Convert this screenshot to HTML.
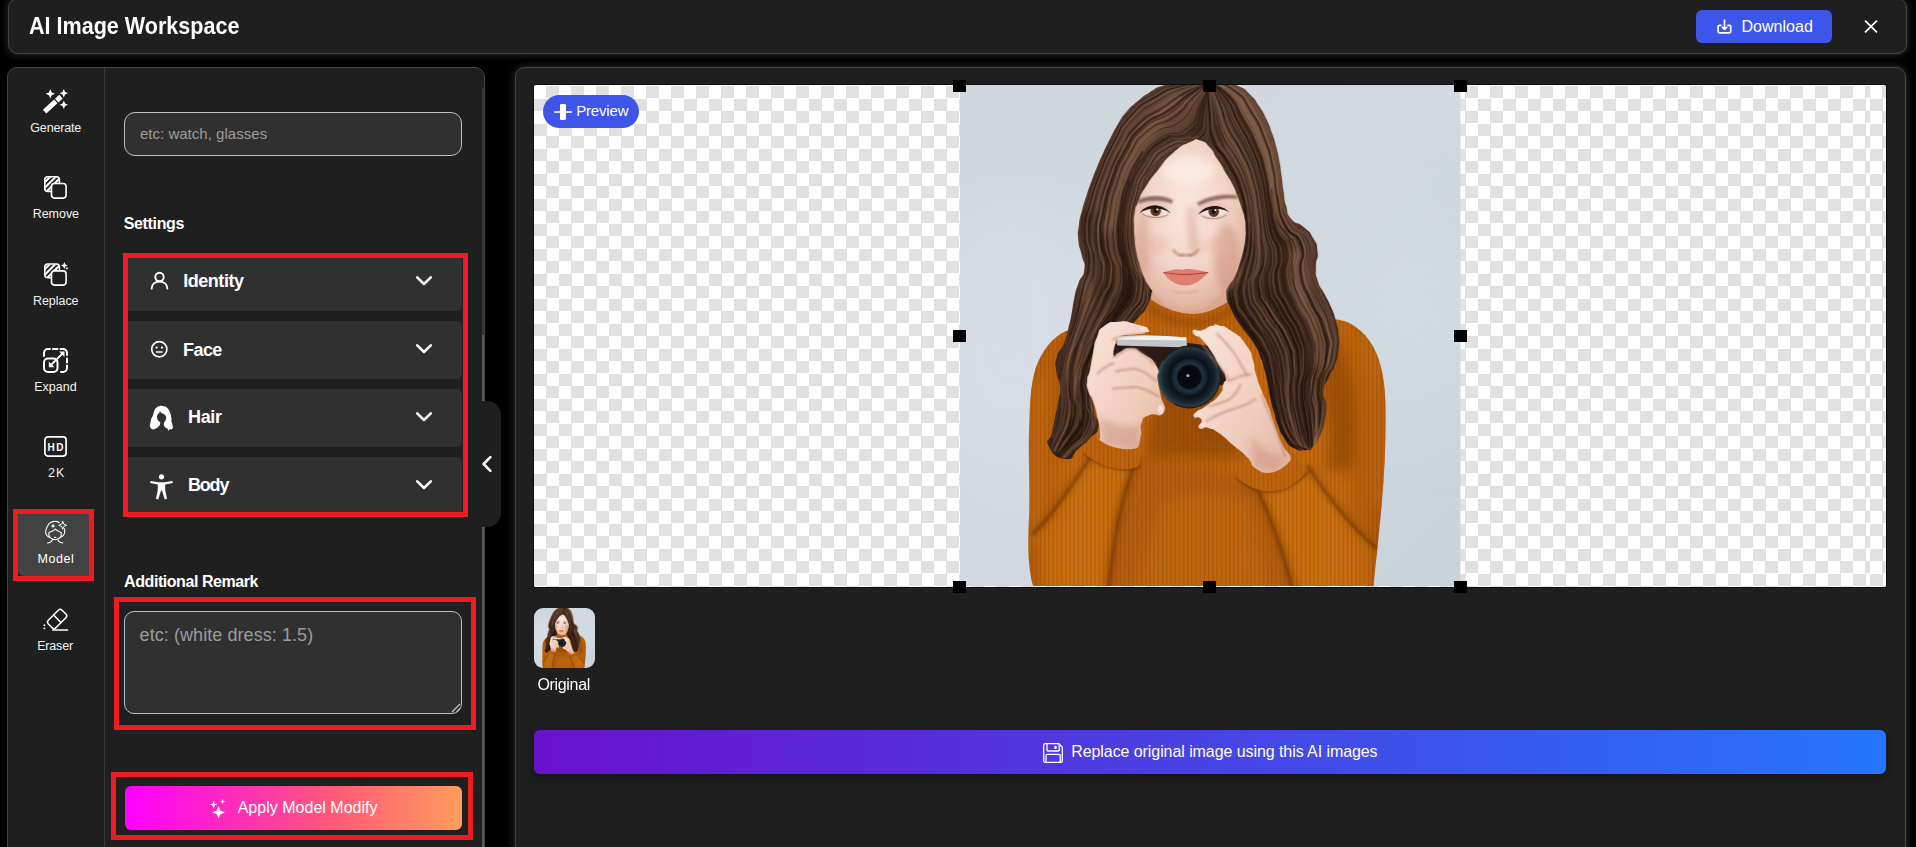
<!DOCTYPE html>
<html lang="en">
<head>
<meta charset="utf-8">
<title>AI Image Workspace</title>
<style>
*{box-sizing:border-box;margin:0;padding:0}
html,body{width:1916px;height:847px;overflow:hidden;background:#000}
body{font-family:"Liberation Sans",sans-serif;color:#fff;position:relative}
#app{position:absolute;left:0;top:0;width:1916px;height:847px;overflow:hidden;background:#000}
.abs{position:absolute}
.t{position:absolute;white-space:nowrap;line-height:1;color:#fff}
.b{font-weight:700}
.panel{position:absolute;background:#1f1f1f;border:1px solid #4b4343;border-radius:10px}
.glow{box-shadow:0 0 7px 1px rgba(255,255,255,.16)}
.red{position:absolute;border:5px solid #ed1c24;z-index:5}
.acc{position:absolute;left:124px;width:338px;height:58px;background:#303030;border-radius:6px}
.lbl{font-size:12.5px;color:#f2f2f2}
.ph{color:#9b9b9b}
svg{position:absolute;overflow:visible}
.ck{top:1px;height:520px;background-image:conic-gradient(#e1e1e1 25%,#fff 0 50%,#e1e1e1 0 75%,#fff 0);background-size:25px 25px}
.hd{width:13px;height:12px;background:#000;z-index:4}
</style>
</head>
<body>
<div id="app">

<!-- ===== HEADER ===== -->
<div class="panel glow" id="header" style="left:8px;top:-2px;width:1899px;height:56px"></div>
<div class="t b" id="t-title" style="left:29.2px;top:14.0px;transform:scaleX(0.8981);transform-origin:0 0;font-size:24px">AI Image Workspace</div>
<div class="abs" id="dl" style="left:1696px;top:10px;width:136px;height:33px;background:#3d55e9;border-radius:6px"></div>
<div class="t" id="t-dl" style="left:1741.5px;top:19.0px;letter-spacing:0.023px;font-size:16px">Download</div>
<svg style="left:1717px;top:19px" width="15" height="15" viewBox="0 0 15 15" fill="none" stroke="#fff" stroke-width="1.7" stroke-linejoin="round">
  <path d="M4.6 6.3 H2.2 a1.1 1.1 0 0 0 -1.1 1.1 V12.6 a1.3 1.3 0 0 0 1.3 1.3 H12.4 a1.3 1.3 0 0 0 1.3 -1.3 V7.4 a1.1 1.1 0 0 0 -1.1 -1.1 H10.4"/>
  <path d="M7.5 0.6 V10.2 M4.9 7.8 L7.5 10.4 L10.1 7.8"/>
</svg>
<svg style="left:1864px;top:19.5px" width="14" height="13" viewBox="0 0 14 13" stroke="#fff" stroke-width="1.7" stroke-linecap="butt"><line x1="1" y1="0.6" x2="13" y2="12.4"/><line x1="13" y1="0.6" x2="1" y2="12.4"/></svg>


<!-- ===== LEFT PANEL ===== -->
<div class="panel" id="left" style="left:7px;top:67px;width:478px;height:800px"></div>
<div class="abs" style="left:104px;top:68px;width:1px;height:780px;background:#3a3636"></div>
<!-- ===== SIDEBAR ITEMS ===== -->
<div class="abs" id="sel" style="left:18px;top:510px;width:76px;height:66px;background:#424242;border-radius:6px"></div>
<div class="red" style="left:13px;top:509px;width:81px;height:72px"></div>

<!-- Generate -->
<svg style="left:43px;top:89px" width="25" height="25" viewBox="0 0 25 25">
  <polygon fill="#fff" points="7.3,0.1 8.7,3.4 12,4.8 8.7,6.2 7.3,9.5 5.9,6.2 2.6,4.8 5.9,3.4"/>
  <polygon fill="#fff" points="20.8,0 22.1,2.9 25,4.2 22.1,5.5 20.8,8.4 19.5,5.5 16.6,4.2 19.5,2.9"/>
  <polygon fill="#fff" points="20.8,11.6 22.1,14.5 25,15.8 22.1,17.1 20.8,20 19.5,17.1 16.6,15.8 19.5,14.5"/>
  <line x1="1.6" y1="22.6" x2="18.6" y2="7.2" stroke="#1f1f1f" stroke-width="7.4"/>
  <line x1="1.6" y1="22.6" x2="18" y2="7.7" stroke="#fff" stroke-width="5"/>
  <line x1="10.9" y1="9.4" x2="15.6" y2="14.6" stroke="#1f1f1f" stroke-width="1.3"/>
</svg>
<div class="t lbl" id="t-gen" style="left:30.3px;top:122.0px;letter-spacing:-0.160px;">Generate</div>

<!-- Remove -->
<svg style="left:44px;top:176px" width="23" height="23" viewBox="0 0 23 23">
  <defs><clipPath id="cp1"><rect x="1.2" y="1.2" width="13.8" height="13.8" rx="2.2"/></clipPath></defs>
  <g clip-path="url(#cp1)" stroke="#fff" stroke-width="2.1">
    <line x1="-2" y1="9" x2="9" y2="-2"/><line x1="-2" y1="14.5" x2="14.5" y2="-2"/><line x1="-2" y1="20" x2="20" y2="-2"/>
  </g>
  <rect x="0.8" y="0.8" width="14.6" height="14.6" rx="3" fill="none" stroke="#fff" stroke-width="1.6"/>
  <rect x="7.5" y="7.5" width="14.6" height="14.6" rx="3" fill="#1f1f1f" stroke="#fff" stroke-width="1.6"/>
</svg>
<div class="t lbl" id="t-rem" style="left:32.7px;top:208.0px;letter-spacing:-0.032px;">Remove</div>

<!-- Replace -->
<svg style="left:44px;top:262px" width="24" height="24" viewBox="0 0 24 24">
  <defs><clipPath id="cp2"><rect x="1.2" y="2.4" width="13.8" height="13" rx="2.2"/></clipPath></defs>
  <g clip-path="url(#cp2)" stroke="#fff" stroke-width="2.1">
    <line x1="-2" y1="10" x2="10" y2="-2"/><line x1="-2" y1="15.5" x2="15.5" y2="-2"/><line x1="-2" y1="21" x2="21" y2="-2"/>
  </g>
  <rect x="0.8" y="2" width="14.6" height="13.8" rx="3" fill="none" stroke="#fff" stroke-width="1.6"/>
  <rect x="7.5" y="8.9" width="14.6" height="14.2" rx="3" fill="#1f1f1f" stroke="#fff" stroke-width="1.6"/>
  <polygon fill="#fff" points="20.3,0 21.3,2.5 23.8,3.5 21.3,4.5 20.3,7 19.3,4.5 16.8,3.5 19.3,2.5"/>
  <polygon fill="#fff" points="22.9,4.6 23.4,5.8 24.6,6.3 23.4,6.8 22.9,8 22.4,6.8 21.2,6.3 22.4,5.8"/>
</svg>
<div class="t lbl" id="t-rep" style="left:32.9px;top:295.0px;letter-spacing:-0.030px;">Replace</div>

<!-- Expand -->
<svg style="left:43px;top:348px" width="25" height="25" viewBox="0 0 25 25">
  <path d="M1 8 V5 a4 4 0 0 1 4 -4 H7 M10 1 H14.5 M17.5 1 H20 a4 4 0 0 1 4 4 V7 M24 10.5 V14.5 M24 17.5 V20 a4 4 0 0 1 -4 4 H18" fill="none" stroke="#fff" stroke-width="2" stroke-linecap="round"/>
  <rect x="1" y="10.5" width="13.5" height="13.5" rx="4" fill="none" stroke="#fff" stroke-width="2"/>
  <line x1="7.5" y1="17.5" x2="20" y2="5" stroke="#fff" stroke-width="1.8"/>
  <polygon fill="#fff" points="21.5,3.5 21.5,9 16,3.5"/>
  <polygon fill="#fff" points="5.8,19.2 5.8,13.5 11.5,19.2"/>
</svg>
<div class="t lbl" id="t-exp" style="left:34.3px;top:381.0px;letter-spacing:-0.019px;">Expand</div>

<!-- 2K / HD -->
<svg style="left:44px;top:436px" width="23" height="21" viewBox="0 0 23 21">
  <rect x="0.9" y="0.9" width="21.2" height="19.2" rx="3" fill="none" stroke="#fff" stroke-width="1.7"/>
  <text id="t-hd" x="12.3" y="14.7" text-anchor="middle" font-family="Liberation Sans, sans-serif" font-weight="700" font-size="10" letter-spacing="1.7" fill="#fff">HD</text>
</svg>
<div class="t lbl" id="t-2k" style="left:48.0px;top:467.0px;letter-spacing:1.084px;">2K</div>

<!-- Model -->
<svg style="left:45px;top:521px" width="22" height="24" viewBox="0 0 22 24" fill="none" stroke="#fff" stroke-width="1.1" stroke-linecap="round" stroke-linejoin="round">
  <path d="M14.3 1.7 C13 0.8 11.6 0.4 10.1 0.4 C8.6 0.4 7.2 0.7 6 1.3 C4.4 2.1 3.3 3.4 2.6 4.9 C1.5 7.1 0.7 8.6 0.7 10.2 C0.7 11.8 0.9 13 1.5 14 C2.2 15 3.2 15.8 4.3 16.2"/>
  <path d="M19.2 7.6 C19.6 8.6 19.8 9.8 19.7 11 C19.6 12.2 19.3 13.2 18.7 14 C18.1 14.9 17.2 15.6 16.1 16"/>
  <path d="M10.1 8 C9.3 9 8.5 9.7 7.5 10.1 C6.5 10.6 5.3 11 4.1 11.2 C3.8 12.2 3.8 13 3.9 13.9 C4 14.6 4.2 15.2 4.5 15.7 C5.3 16.8 6.4 17.6 7.5 18.1 C8.3 18.5 9.2 18.8 10.1 18.8 C11 18.8 11.9 18.5 12.7 18.1 C13.9 17.5 15 16.7 15.8 15.6 C16.2 14.6 16.4 13.2 16.2 11.6 C15 11.2 14 10.6 13.1 9.9 C12 9.4 11 8.8 10.1 8 Z"/>
  <path d="M7.6 18.3 C7.2 19.6 6.4 20.6 5.2 21.2 C4.4 21.6 3.4 21.9 2.4 22"/>
  <path d="M12.7 18.3 C13.1 19.6 13.9 20.6 15.1 21.2 C15.9 21.6 16.8 21.9 17.8 22"/>
  <path d="M9.5 16.3 h1.3" stroke-width="1.2"/>
  <path d="M17.7 0.3 L18.8 3.2 L21.7 4.3 L18.8 5.4 L17.7 8.3 L16.6 5.4 L13.7 4.3 L16.6 3.2 Z" stroke-width="0.95"/>
  <polygon fill="#fff" stroke="none" points="8,2.6 8.7,4.3 10.4,5 8.7,5.7 8,7.4 7.3,5.7 5.6,5 7.3,4.3"/>
</svg>
<div class="t lbl" id="t-mod" style="left:37.6px;top:553.0px;letter-spacing:0.565px;color:#fff">Model</div>

<!-- Eraser -->
<svg style="left:43px;top:608px" width="25" height="23" viewBox="0 0 25 23" fill="none" stroke="#fff" stroke-width="1.5" stroke-linecap="round">
  <rect x="-9.7" y="-5.35" width="19.4" height="10.7" rx="2.6" transform="translate(14.1,11) rotate(-45)"/>
  <line x1="10.6" y1="6.9" x2="17.9" y2="14.5"/>
  <line x1="9.6" y1="21.9" x2="24.6" y2="21.9"/>
  <rect x="0.6" y="16.4" width="1.6" height="1.6" fill="#fff" stroke="none"/>
  <rect x="0.6" y="19.6" width="1.6" height="1.6" fill="#fff" stroke="none"/>
</svg>
<div class="t lbl" id="t-era" style="left:37.2px;top:640.0px;letter-spacing:-0.188px;">Eraser</div>


<!-- ===== SETTINGS COLUMN ===== -->
<div class="abs" id="inp1" style="left:124px;top:112px;width:338px;height:44px;background:#303030;border:1px solid #b9c0c8;border-radius:11px"></div>
<div class="t ph" id="t-ph1" style="left:139.9px;top:126.3px;letter-spacing:0.029px;font-size:15px">etc: watch, glasses</div>

<div class="t b" id="t-set" style="left:123.7px;top:216.3px;letter-spacing:-0.341px;font-size:16px">Settings</div>

<div class="acc" style="top:253px"></div>
<div class="acc" style="top:321px"></div>
<div class="acc" style="top:389px"></div>
<div class="acc" style="top:457px"></div>
<div class="red" style="left:123px;top:253px;width:345px;height:264px"></div>

<!-- identity icon -->
<svg style="left:150px;top:271px" width="19" height="19" viewBox="0 0 19 19" fill="none" stroke="#fff" stroke-width="1.9">
  <circle cx="9.5" cy="6" r="4.2"/>
  <path d="M1.6 17.6 C1.8 13.4 5 10.6 9.5 10.6 C14 10.6 17.2 13.4 17.4 17.6" stroke-linecap="round"/>
</svg>
<div class="t b" id="t-id" style="left:183.2px;top:272.0px;letter-spacing:-0.458px;font-size:18px">Identity</div>

<!-- face icon -->
<svg style="left:150px;top:340px" width="19" height="19" viewBox="0 0 19 19" fill="none" stroke="#fff">
  <circle cx="9.3" cy="9.3" r="7.6" stroke-width="1.7"/>
  <circle cx="6.6" cy="7.6" r="1.15" fill="#fff" stroke="none"/>
  <circle cx="12" cy="7.6" r="1.15" fill="#fff" stroke="none"/>
  <line x1="6" y1="12" x2="12.6" y2="12" stroke-width="1.5"/>
</svg>
<div class="t b" id="t-face" style="left:183.0px;top:341.1px;letter-spacing:-0.552px;font-size:18px">Face</div>

<!-- hair icon -->
<svg style="left:149px;top:405px" width="25" height="26" viewBox="0 0 25 26">
  <path fill="#fff" d="M13.3 0.9 C11.3 0.8 12.1 0.8 10.2 1.3 C8.3 1.8 9.1 1.4 7.7 2.4 C6.3 3.4 6.8 3.0 5.9 4.4 C5.0 5.8 5.5 5.1 5.0 6.6 C4.5 8.1 4.9 7.4 4.4 9.0 C3.9 10.6 4.2 9.8 3.5 11.3 C2.8 12.8 3.0 12.0 2.4 13.6 C1.8 15.2 2.1 14.5 1.7 16.2 C1.3 17.9 1.6 17.0 1.3 18.6 C1.1 20.2 0.8 19.4 0.9 20.9 C1.1 22.4 1.1 21.9 1.8 23.0 C2.5 24.1 1.8 24.0 3.1 24.3 C4.4 24.6 4.1 24.3 5.6 23.9 C7.1 23.5 6.4 23.8 7.7 23.0 C9.0 22.2 8.6 22.6 9.6 21.6 C10.6 20.6 10.2 21.0 10.7 20.0 C11.2 19.0 11.1 19.5 11.2 18.6 C11.3 17.7 11.6 18.2 11.1 17.3 C10.6 16.4 10.4 16.9 9.6 16.0 C8.8 15.1 9.1 15.6 8.6 14.5 C8.1 13.4 8.2 13.9 8.1 12.8 C8.0 11.7 8.0 12.2 8.2 11.1 C8.4 10.0 8.2 10.5 8.6 9.5 C9.0 8.5 8.9 8.5 9.4 8.2 C9.9 7.9 9.9 8.9 10.2 8.6 C10.5 8.3 10.1 8.0 10.4 7.2 C10.7 6.4 10.6 6.2 11.1 6.3 C11.6 6.4 11.3 6.8 11.9 7.4 C12.5 8.0 12.0 7.8 12.8 8.2 C13.6 8.6 13.3 8.3 14.2 8.7 C15.1 9.1 14.6 8.8 15.4 9.4 C16.2 10.0 15.9 9.6 16.5 10.5 C17.1 11.4 16.9 11.0 17.1 12.0 C17.3 13.0 17.2 12.6 17.1 13.6 C17.0 14.6 17.1 14.0 16.7 15.0 C16.3 16.0 16.4 15.6 15.8 16.6 C15.2 17.6 15.3 17.0 15.0 17.9 C14.7 18.8 14.8 18.4 14.8 19.3 C14.8 20.2 14.6 19.6 15.0 20.5 C15.4 21.4 15.2 21.1 15.9 21.9 C16.6 22.7 16.2 22.3 17.1 23.0 C18.0 23.7 17.8 23.0 18.6 23.9 C19.4 24.8 18.9 25.4 19.6 25.6 C20.3 25.8 19.6 24.8 20.6 24.4 C21.6 24.0 21.6 24.7 22.6 24.3 C23.6 23.9 23.1 24.0 23.5 23.2 C23.9 22.4 24.0 23.1 23.9 21.8 C23.8 20.5 23.7 21.0 23.3 19.4 C22.9 17.8 22.9 18.7 22.6 17.1 C22.3 15.5 22.6 16.2 22.5 14.5 C22.4 12.8 22.5 13.6 22.2 12.0 C21.9 10.4 22.1 11.2 21.7 9.6 C21.3 8.0 21.5 8.7 20.9 7.3 C20.3 5.9 20.7 6.6 20.0 5.3 C19.3 4.0 19.6 4.5 18.8 3.5 C18.0 2.5 18.5 3.0 17.6 2.4 C16.7 1.8 17.6 2.1 16.2 1.6 C14.8 1.1 15.3 1.1 13.3 0.9 Z"/>
</svg>
<div class="t b" id="t-hair" style="left:188.1px;top:408.0px;letter-spacing:-0.365px;font-size:18px">Hair</div>

<!-- body icon -->
<svg style="left:150px;top:474px" width="23" height="26" viewBox="0 0 23 26">
  <circle cx="11.5" cy="2.8" r="2.6" fill="#fff"/>
  <path fill="#fff" d="M0.6 7 L8.6 8.2 L14.4 8.2 L22.4 7 L22.8 9 L15.2 10.6 L15.2 16 L17 24.8 L14.8 25.4 L11.9 16.6 L11.1 16.6 L8.2 25.4 L6 24.8 L7.8 16 L7.8 10.6 L0.2 9 Z"/>
</svg>
<div class="t b" id="t-body" style="left:188.1px;top:475.8px;letter-spacing:-1.235px;font-size:18px">Body</div>

<!-- chevrons -->
<svg style="left:415px;top:275px" width="18" height="12" viewBox="0 0 18 12" fill="none" stroke="#fff" stroke-width="2.6" stroke-linecap="round" stroke-linejoin="round"><path d="M2.2 2.4 L9 9 L15.8 2.4"/></svg>
<svg style="left:415px;top:343px" width="18" height="12" viewBox="0 0 18 12" fill="none" stroke="#fff" stroke-width="2.6" stroke-linecap="round" stroke-linejoin="round"><path d="M2.2 2.4 L9 9 L15.8 2.4"/></svg>
<svg style="left:415px;top:411px" width="18" height="12" viewBox="0 0 18 12" fill="none" stroke="#fff" stroke-width="2.6" stroke-linecap="round" stroke-linejoin="round"><path d="M2.2 2.4 L9 9 L15.8 2.4"/></svg>
<svg style="left:415px;top:479px" width="18" height="12" viewBox="0 0 18 12" fill="none" stroke="#fff" stroke-width="2.6" stroke-linecap="round" stroke-linejoin="round"><path d="M2.2 2.4 L9 9 L15.8 2.4"/></svg>

<div class="t b" id="t-add" style="left:124.1px;top:574.1px;letter-spacing:-0.440px;font-size:16px">Additional Remark</div>
<div class="abs" id="ta" style="left:124px;top:611px;width:338px;height:103px;background:#303030;border:1px solid #b9c0c8;border-radius:10px"></div>
<div class="t ph" id="t-ph2" style="left:139.6px;top:625.7px;letter-spacing:0.070px;font-size:18px">etc: (white dress: 1.5)</div>
<svg style="left:451px;top:703px" width="10" height="10" viewBox="0 0 10 10" stroke="#c8c8c8" stroke-width="1.1"><line x1="1" y1="9" x2="9" y2="1"/><line x1="5.5" y1="9" x2="9" y2="5.5"/></svg>
<div class="red" style="left:114px;top:597px;width:362px;height:133px"></div>

<div class="abs" id="apply" style="left:125px;top:786px;width:337px;height:44px;border-radius:6px;background:linear-gradient(90deg,#ff00ff 0%,#ff2fb4 35%,#ff5a78 62%,#ff9d5c 100%)"></div>
<svg style="left:210px;top:799px" width="16" height="20" viewBox="0 0 16 20">
  <polygon fill="#fff" points="8.6,7 10.4,11.6 15,13.4 10.4,15.2 8.6,19.8 6.8,15.2 2.2,13.4 6.8,11.6"/>
  <polygon fill="#fff" points="3.6,2 4.6,4.6 7.2,5.6 4.6,6.6 3.6,9.2 2.6,6.6 0,5.6 2.6,4.6"/>
  <polygon fill="#fff" points="12.6,0 13.3,1.9 15.2,2.6 13.3,3.3 12.6,5.2 11.9,3.3 10,2.6 11.9,1.9"/>
</svg>
<div class="t" id="t-apply" style="left:237.7px;top:799.8px;letter-spacing:0.012px;font-size:16px">Apply Model Modify</div>
<div class="red" style="left:111px;top:772px;width:362px;height:68px"></div>

<!-- scrollbar + collapse tab -->
<div class="abs" style="left:482px;top:88px;width:2px;height:760px;background:#343434"></div>
<div class="abs" style="left:482px;top:335px;width:2px;height:520px;background:#5a5a5a"></div>
<div class="abs" style="left:485px;top:62px;width:24px;height:800px;background:#000"></div>
<div class="abs" id="tab" style="left:472px;top:401px;width:29px;height:126px;background:#1f1f1f;border-radius:0 14px 14px 0"></div>
<svg style="left:481px;top:455px" width="12" height="18" viewBox="0 0 12 18" fill="none" stroke="#fff" stroke-width="2.6" stroke-linecap="round" stroke-linejoin="round"><path d="M9.4 2.2 L2.6 9 L9.4 15.8"/></svg>


<!-- ===== RIGHT PANEL ===== -->
<div class="panel glow" id="right" style="left:515px;top:67px;width:1391px;height:800px"></div>
<!-- ===== CANVAS ===== -->
<div class="abs" id="canvas" style="left:533.5px;top:85px;width:1352.5px;height:501.5px;border-radius:2px;box-shadow:0 0 0 1px rgba(0,0,0,.55);background:#fff;overflow:hidden">
<div class="abs ck" style="left:0;width:668.9px"></div>
<div class="abs ck" style="left:669.9px;width:666.2px"></div>
<div class="abs ck" style="left:1336.1px;width:20px"></div>
</div>
<!--PHOTO-START--><svg width="0" height="0" style="position:absolute">
<defs>
  <linearGradient id="gbg" x1="0" y1="0" x2="1" y2="1">
    <stop offset="0" stop-color="#cfd6de"/><stop offset=".5" stop-color="#d2d9e1"/><stop offset="1" stop-color="#c9d3dc"/>
  </linearGradient>
  <radialGradient id="gface" cx=".47" cy=".4" r=".66">
    <stop offset="0" stop-color="#fbe7de"/><stop offset=".55" stop-color="#f3d5c8"/><stop offset=".85" stop-color="#e4b7a3"/><stop offset="1" stop-color="#d09c86"/>
  </radialGradient>
  <linearGradient id="ghair" x1="0" y1="0" x2="0" y2="1">
    <stop offset="0" stop-color="#5b4132"/><stop offset=".35" stop-color="#4e3529"/><stop offset=".7" stop-color="#3f291f"/><stop offset="1" stop-color="#35211a"/>
  </linearGradient>
  <linearGradient id="gsw" x1="0" y1="0" x2="1" y2="0">
    <stop offset="0" stop-color="#b55c0b"/><stop offset=".15" stop-color="#c76b10"/><stop offset=".5" stop-color="#c1650d"/><stop offset=".85" stop-color="#c76b10"/><stop offset="1" stop-color="#ae570a"/>
  </linearGradient>
  <linearGradient id="gskin" x1="0" y1="0" x2="1" y2="1">
    <stop offset="0" stop-color="#fae4da"/><stop offset=".6" stop-color="#f0cdbd"/><stop offset="1" stop-color="#e2b39d"/>
  </linearGradient>
  <radialGradient id="glens" cx=".5" cy=".5" r=".5">
    <stop offset="0" stop-color="#04060a"/><stop offset=".36" stop-color="#070b10"/><stop offset=".42" stop-color="#223340"/><stop offset=".56" stop-color="#15222c"/><stop offset=".6" stop-color="#0b1218"/><stop offset=".8" stop-color="#18232b"/><stop offset=".93" stop-color="#2b3a44"/><stop offset="1" stop-color="#0d1216"/>
  </radialGradient>
  <filter id="b1" x="-10%" y="-10%" width="120%" height="120%"><feGaussianBlur stdDeviation="1"/></filter>
  <filter id="b05" x="-5%" y="-5%" width="110%" height="110%"><feGaussianBlur stdDeviation=".6"/></filter>
  <filter id="b3" x="-20%" y="-20%" width="140%" height="140%"><feGaussianBlur stdDeviation="3.5"/></filter>
  <filter id="b40" x="-100%" y="-100%" width="300%" height="300%"><feGaussianBlur stdDeviation="40"/></filter>
  <filter id="b6" x="-30%" y="-30%" width="160%" height="160%"><feGaussianBlur stdDeviation="7"/></filter>
  <pattern id="rib" width="4.2" height="8" patternUnits="userSpaceOnUse"><rect x="0" width="1.1" height="8" fill="#7a3c06" opacity=".36"/></pattern>
  <clipPath id="chL"><path d="M249.0 -2.0 C243.3 -7.2 243.9 -2.1 233.6 -2.0 C223.4 -1.9 228.5 -2.5 218.3 -1.7 C208.1 -0.8 212.8 -2.4 203.1 0.5 C193.5 3.5 198.0 1.9 189.4 7.3 C180.7 12.6 185.0 10.0 177.2 16.6 C169.4 23.2 172.6 19.4 166.0 27.1 C159.4 34.8 162.7 31.1 157.4 39.8 C152.1 48.5 154.8 44.2 150.1 53.3 C145.5 62.4 147.7 57.9 143.4 67.2 C139.1 76.4 141.2 71.8 137.2 81.2 C133.3 90.6 135.1 85.9 131.6 95.5 C128.0 105.1 129.7 100.3 126.5 110.0 C123.4 119.7 124.7 114.8 122.1 124.7 C119.6 134.6 120.2 129.6 118.9 139.7 C117.6 149.8 117.3 144.9 118.2 155.0 C119.1 165.1 119.5 160.2 121.6 170.0 C123.6 179.9 125.5 175.0 124.4 184.6 C123.3 194.1 121.7 189.0 118.2 198.7 C114.8 208.3 116.4 203.5 114.1 213.4 C111.9 223.4 113.5 218.5 111.6 228.6 C109.7 238.6 110.9 233.7 108.4 243.6 C105.9 253.5 108.0 248.9 104.1 258.3 C100.2 267.7 99.5 262.4 96.9 271.8 C94.2 281.3 95.2 276.8 96.3 286.8 C97.3 296.7 99.4 291.6 100.0 301.6 C100.6 311.7 99.7 306.7 98.1 316.8 C96.4 326.9 97.1 321.8 95.1 331.9 C93.2 341.9 94.2 336.9 92.1 347.0 C90.1 357.0 84.4 353.0 89.0 362.0 C93.6 371.0 96.4 373.3 106.0 374.0 C115.6 374.7 110.0 370.8 117.8 364.0 C125.6 357.2 122.5 361.2 129.4 353.7 C136.3 346.1 136.9 350.4 138.4 341.4 C140.0 332.4 135.8 336.8 134.1 326.7 C132.4 316.7 133.2 321.5 133.4 311.3 C133.6 301.0 132.7 305.9 134.7 295.8 C136.7 285.8 135.5 290.6 139.5 281.1 C143.5 271.7 141.3 276.2 146.8 267.5 C152.3 258.8 149.4 263.0 156.0 255.1 C162.6 247.1 159.3 251.0 166.5 243.7 C173.7 236.3 170.9 240.6 177.7 232.9 C184.5 225.3 183.0 229.8 187.0 220.7 C191.0 211.6 190.3 215.7 189.8 205.7 C189.3 195.8 188.6 200.7 185.6 190.8 C182.6 181.0 183.5 186.0 180.8 176.1 C178.2 166.1 178.8 171.2 177.5 161.0 C176.2 150.8 176.8 155.8 176.9 145.5 C177.0 135.2 176.4 140.3 177.7 130.0 C179.1 119.8 178.2 124.8 180.9 114.9 C183.6 105.0 181.8 109.7 185.8 100.2 C189.9 90.8 187.3 95.1 193.0 86.5 C198.7 78.0 195.4 81.6 202.8 74.6 C210.2 67.5 206.1 69.5 215.2 65.4 C224.4 61.4 220.4 64.7 230.4 62.5 C240.3 60.2 238.7 64.6 245.2 58.6 C251.7 52.6 248.3 54.3 249.9 44.5 C251.6 34.6 249.8 39.3 250.1 29.0 C250.3 18.6 251.1 23.8 250.7 13.5 C250.4 3.2 254.7 3.2 249.0 -2.0 Z"/></clipPath>
  <clipPath id="chR"><path d="M249.0 -2.0 C254.5 -6.5 254.0 -2.6 263.7 -1.5 C273.5 -0.4 269.4 -2.6 278.2 1.2 C286.9 5.0 283.1 3.1 290.0 9.9 C296.9 16.7 293.6 13.4 298.9 21.6 C304.3 29.8 301.9 25.6 306.1 34.5 C310.3 43.3 308.3 38.9 311.6 48.2 C314.8 57.4 313.4 52.8 315.9 62.3 C318.3 71.8 317.3 67.0 319.0 76.7 C320.7 86.4 319.7 81.6 321.1 91.3 C322.4 101.0 321.5 96.2 323.0 105.9 C324.5 115.6 322.9 111.1 325.5 120.5 C328.1 129.8 325.0 126.8 330.8 134.0 C336.7 141.2 335.9 135.7 343.1 142.0 C350.4 148.4 348.0 144.7 352.6 153.1 C357.3 161.4 356.2 157.5 357.1 167.0 C358.0 176.5 355.3 172.0 355.3 181.6 C355.4 191.3 354.3 186.8 357.2 196.0 C360.1 205.1 359.5 200.3 364.0 209.1 C368.4 217.8 366.7 213.2 370.6 222.3 C374.4 231.3 372.9 226.7 375.5 236.2 C378.0 245.6 377.4 240.9 378.2 250.7 C379.0 260.4 379.1 255.7 377.8 265.4 C376.6 275.0 377.8 270.6 374.4 279.7 C371.1 288.8 371.7 283.9 367.8 292.8 C363.9 301.6 363.7 296.9 362.8 306.2 C362.0 315.6 365.0 311.0 365.4 320.8 C365.7 330.5 365.8 325.8 363.9 335.4 C362.1 345.0 363.8 340.7 359.8 349.5 C355.8 358.4 356.6 356.8 352.0 362.0 C347.4 367.2 352.4 364.7 346.0 365.0 C339.6 365.3 340.4 367.0 332.9 362.8 C325.4 358.6 328.7 360.1 323.6 352.4 C318.5 344.7 320.9 348.4 317.6 339.7 C314.2 331.0 316.1 335.3 313.5 326.3 C310.9 317.2 312.0 321.8 309.9 312.7 C307.9 303.5 309.2 308.0 307.3 298.9 C305.4 289.7 306.7 294.2 304.2 285.2 C301.8 276.1 303.4 280.5 299.9 271.8 C296.5 263.1 298.7 267.1 293.9 259.1 C289.1 251.1 291.2 255.3 285.6 247.8 C280.1 240.2 282.3 244.4 277.3 236.5 C272.3 228.6 274.5 232.6 270.7 224.0 C267.0 215.5 266.6 219.7 266.1 210.8 C265.7 202.0 266.4 206.2 269.4 197.5 C272.5 188.8 271.5 193.3 275.2 184.7 C278.9 176.1 277.9 180.6 280.5 171.7 C283.2 162.8 282.0 167.2 283.1 157.9 C284.3 148.6 284.0 153.2 284.0 143.9 C284.0 134.5 284.3 139.1 283.3 129.8 C282.3 120.5 283.1 125.1 281.0 116.0 C278.9 106.9 280.1 111.3 276.9 102.5 C273.8 93.7 275.7 97.9 271.4 89.6 C267.2 81.3 269.7 85.1 264.2 77.6 C258.6 70.2 259.5 75.0 254.8 67.2 C250.1 59.3 252.0 63.1 250.0 54.1 C247.9 45.1 249.4 49.5 248.6 40.1 C247.9 30.8 248.2 35.5 247.7 26.1 C247.3 16.7 246.8 21.4 247.3 12.1 C247.7 2.7 243.5 2.5 249.0 -2.0 Z"/></clipPath>
  <clipPath id="csw"><path d="M73 501 C67 480 68 455 69 430 C70 400 68 370 69 345 C70 320 70 300 76 282 C82 266 92 252 106 246 C130 236 160 232 186 222 L190 214 C205 224 220 228 232 228 C246 228 262 222 276 211 L280 222 C310 228 350 228 384 236 C400 242 412 256 418 274 C424 292 425 310 425 330 C425 360 424 390 421 420 C419 445 416 470 413 501 Z"/></clipPath>

  <symbol id="photo" viewBox="0 0 500 501" preserveAspectRatio="none">
    <rect width="500" height="501" fill="url(#gbg)"/>
    <ellipse cx="50" cy="250" rx="110" ry="150" fill="#dde3e9" opacity=".45" filter="url(#b40)"/>
    <ellipse cx="460" cy="240" rx="80" ry="110" fill="#d9e0e7" opacity=".4" filter="url(#b40)"/>
    <!-- hair behind the neck -->
    <path fill="#2f1d15" d="M180 150 L290 150 L300 250 L170 250 Z"/>
    <path fill="#4a3226" d="M236 -2 L264 -2 L262 75 L238 75 Z"/>
    <ellipse cx="231" cy="125" rx="60" ry="92" fill="#4b3327"/>
    <!-- sweater -->
    <path fill="url(#gsw)" d="M73 501 C67 480 68 455 69 430 C70 400 68 370 69 345 C70 320 70 300 76 282 C82 266 92 252 106 246 C130 236 160 232 186 222 L190 214 C205 224 220 228 232 228 C246 228 262 222 276 211 L280 222 C310 228 350 228 384 236 C400 242 412 256 418 274 C424 292 425 310 425 330 C425 360 424 390 421 420 C419 445 416 470 413 501 Z"/>
    <g clip-path="url(#csw)">
      <g filter="url(#b6)">
        <path fill="#a9570c" opacity=".55" d="M176 372 L294 392 L336 505 L144 505 L154 433 Z"/>
        <path fill="#7a3a06" opacity=".5" d="M340 250 C366 300 372 350 365 385 L392 385 C398 330 392 280 372 240 Z"/>
        <path fill="#7a3a06" opacity=".45" d="M104 250 C96 280 100 320 96 360 L122 360 C126 320 130 280 140 250 Z"/>
        <path fill="#d47b1b" opacity=".4" d="M396 250 C412 290 414 350 410 420 L426 420 L426 250 Z"/>
        <path fill="#d47b1b" opacity=".35" d="M68 300 L86 290 C82 340 82 400 84 460 L68 460 Z"/>
        <path fill="#7a3a06" opacity=".5" d="M196 300 L262 300 L286 372 L184 372 Z"/>
        <path fill="#cf7617" opacity=".4" d="M200 420 C220 405 260 405 290 420 L306 505 L176 505 Z"/>
      </g>
      <g filter="url(#b3)">
        <path fill="#cf7516" opacity=".6" d="M137 350 L172 372 L160 402 L150 436 L146 468 L141 505 L84 505 L80 456 L97 428 L120 388 Z"/>
        <path fill="#cf7516" opacity=".55" d="M296 392 L338 374 L350 384 L366 410 L392 444 L410 462 L410 505 L340 505 L327 458 L312 424 Z"/>
        <path fill="none" stroke="#6e3405" stroke-width="5" opacity=".6" d="M176 374 C166 400 158 432 153 466 L148 505"/>
        <path fill="none" stroke="#6e3405" stroke-width="5" opacity=".6" d="M292 394 C306 424 320 456 332 505"/>
        <path fill="none" stroke="#6e3405" stroke-width="4.5" opacity=".6" d="M130 372 C112 400 94 428 72 450"/>
        <path fill="none" stroke="#6e3405" stroke-width="4.5" opacity=".6" d="M346 380 C366 410 390 442 416 464"/>
        <path fill="none" stroke="#6e3405" stroke-width="4" opacity=".5" d="M126 368 C140 380 160 386 180 380"/>
        <path fill="none" stroke="#6e3405" stroke-width="4" opacity=".5" d="M280 392 C296 410 322 410 346 386"/>
      </g>
      <g filter="url(#b1)" fill="none" stroke="#5e2b03" stroke-linecap="round" opacity=".55">
        <path stroke-width="2.2" d="M176 375 C166 400 158 432 153 466 L148 505"/>
        <path stroke-width="2.2" d="M293 395 C306 424 320 456 332 505"/>
        <path stroke-width="2" d="M129 374 C112 400 94 428 73 449"/>
        <path stroke-width="2" d="M347 381 C366 410 390 442 416 463"/>
        <path stroke-width="2" d="M124 369 C140 382 160 388 179 382"/>
        <path stroke-width="2" d="M277 393 C296 412 324 412 347 387"/>
      </g>
      <rect x="60" y="200" width="380" height="310" fill="url(#rib)"/>
    </g>
    <!-- neck -->
    <path fill="#dba88f" d="M196 188 L268 188 L274 214 C258 226 244 230 232 230 C220 230 204 226 190 214 Z"/>
    <!-- turtleneck -->
    <path fill="#bf630d" d="M188 213 C204 224 220 229 232 229 C246 229 262 222 277 210 L284 252 L184 252 Z"/>
    <path fill="url(#rib)" d="M188 213 C204 224 220 229 232 229 C246 229 262 222 277 210 L284 252 L184 252 Z"/>
    <path fill="#7a3a06" opacity=".35" filter="url(#b3)" d="M186 214 C200 226 220 234 232 234 C246 234 262 228 278 214 L278 224 C262 236 246 242 232 242 C218 242 200 236 186 226 Z"/>
    <!-- hair -->
    <path fill="url(#ghair)" d="M249.0 -2.0 C243.3 -7.2 243.9 -2.1 233.6 -2.0 C223.4 -1.9 228.5 -2.5 218.3 -1.7 C208.1 -0.8 212.8 -2.4 203.1 0.5 C193.5 3.5 198.0 1.9 189.4 7.3 C180.7 12.6 185.0 10.0 177.2 16.6 C169.4 23.2 172.6 19.4 166.0 27.1 C159.4 34.8 162.7 31.1 157.4 39.8 C152.1 48.5 154.8 44.2 150.1 53.3 C145.5 62.4 147.7 57.9 143.4 67.2 C139.1 76.4 141.2 71.8 137.2 81.2 C133.3 90.6 135.1 85.9 131.6 95.5 C128.0 105.1 129.7 100.3 126.5 110.0 C123.4 119.7 124.7 114.8 122.1 124.7 C119.6 134.6 120.2 129.6 118.9 139.7 C117.6 149.8 117.3 144.9 118.2 155.0 C119.1 165.1 119.5 160.2 121.6 170.0 C123.6 179.9 125.5 175.0 124.4 184.6 C123.3 194.1 121.7 189.0 118.2 198.7 C114.8 208.3 116.4 203.5 114.1 213.4 C111.9 223.4 113.5 218.5 111.6 228.6 C109.7 238.6 110.9 233.7 108.4 243.6 C105.9 253.5 108.0 248.9 104.1 258.3 C100.2 267.7 99.5 262.4 96.9 271.8 C94.2 281.3 95.2 276.8 96.3 286.8 C97.3 296.7 99.4 291.6 100.0 301.6 C100.6 311.7 99.7 306.7 98.1 316.8 C96.4 326.9 97.1 321.8 95.1 331.9 C93.2 341.9 94.2 336.9 92.1 347.0 C90.1 357.0 84.4 353.0 89.0 362.0 C93.6 371.0 96.4 373.3 106.0 374.0 C115.6 374.7 110.0 370.8 117.8 364.0 C125.6 357.2 122.5 361.2 129.4 353.7 C136.3 346.1 136.9 350.4 138.4 341.4 C140.0 332.4 135.8 336.8 134.1 326.7 C132.4 316.7 133.2 321.5 133.4 311.3 C133.6 301.0 132.7 305.9 134.7 295.8 C136.7 285.8 135.5 290.6 139.5 281.1 C143.5 271.7 141.3 276.2 146.8 267.5 C152.3 258.8 149.4 263.0 156.0 255.1 C162.6 247.1 159.3 251.0 166.5 243.7 C173.7 236.3 170.9 240.6 177.7 232.9 C184.5 225.3 183.0 229.8 187.0 220.7 C191.0 211.6 190.3 215.7 189.8 205.7 C189.3 195.8 188.6 200.7 185.6 190.8 C182.6 181.0 183.5 186.0 180.8 176.1 C178.2 166.1 178.8 171.2 177.5 161.0 C176.2 150.8 176.8 155.8 176.9 145.5 C177.0 135.2 176.4 140.3 177.7 130.0 C179.1 119.8 178.2 124.8 180.9 114.9 C183.6 105.0 181.8 109.7 185.8 100.2 C189.9 90.8 187.3 95.1 193.0 86.5 C198.7 78.0 195.4 81.6 202.8 74.6 C210.2 67.5 206.1 69.5 215.2 65.4 C224.4 61.4 220.4 64.7 230.4 62.5 C240.3 60.2 238.7 64.6 245.2 58.6 C251.7 52.6 248.3 54.3 249.9 44.5 C251.6 34.6 249.8 39.3 250.1 29.0 C250.3 18.6 251.1 23.8 250.7 13.5 C250.4 3.2 254.7 3.2 249.0 -2.0 Z"/>
    <path fill="url(#ghair)" d="M249.0 -2.0 C254.5 -6.5 254.0 -2.6 263.7 -1.5 C273.5 -0.4 269.4 -2.6 278.2 1.2 C286.9 5.0 283.1 3.1 290.0 9.9 C296.9 16.7 293.6 13.4 298.9 21.6 C304.3 29.8 301.9 25.6 306.1 34.5 C310.3 43.3 308.3 38.9 311.6 48.2 C314.8 57.4 313.4 52.8 315.9 62.3 C318.3 71.8 317.3 67.0 319.0 76.7 C320.7 86.4 319.7 81.6 321.1 91.3 C322.4 101.0 321.5 96.2 323.0 105.9 C324.5 115.6 322.9 111.1 325.5 120.5 C328.1 129.8 325.0 126.8 330.8 134.0 C336.7 141.2 335.9 135.7 343.1 142.0 C350.4 148.4 348.0 144.7 352.6 153.1 C357.3 161.4 356.2 157.5 357.1 167.0 C358.0 176.5 355.3 172.0 355.3 181.6 C355.4 191.3 354.3 186.8 357.2 196.0 C360.1 205.1 359.5 200.3 364.0 209.1 C368.4 217.8 366.7 213.2 370.6 222.3 C374.4 231.3 372.9 226.7 375.5 236.2 C378.0 245.6 377.4 240.9 378.2 250.7 C379.0 260.4 379.1 255.7 377.8 265.4 C376.6 275.0 377.8 270.6 374.4 279.7 C371.1 288.8 371.7 283.9 367.8 292.8 C363.9 301.6 363.7 296.9 362.8 306.2 C362.0 315.6 365.0 311.0 365.4 320.8 C365.7 330.5 365.8 325.8 363.9 335.4 C362.1 345.0 363.8 340.7 359.8 349.5 C355.8 358.4 356.6 356.8 352.0 362.0 C347.4 367.2 352.4 364.7 346.0 365.0 C339.6 365.3 340.4 367.0 332.9 362.8 C325.4 358.6 328.7 360.1 323.6 352.4 C318.5 344.7 320.9 348.4 317.6 339.7 C314.2 331.0 316.1 335.3 313.5 326.3 C310.9 317.2 312.0 321.8 309.9 312.7 C307.9 303.5 309.2 308.0 307.3 298.9 C305.4 289.7 306.7 294.2 304.2 285.2 C301.8 276.1 303.4 280.5 299.9 271.8 C296.5 263.1 298.7 267.1 293.9 259.1 C289.1 251.1 291.2 255.3 285.6 247.8 C280.1 240.2 282.3 244.4 277.3 236.5 C272.3 228.6 274.5 232.6 270.7 224.0 C267.0 215.5 266.6 219.7 266.1 210.8 C265.7 202.0 266.4 206.2 269.4 197.5 C272.5 188.8 271.5 193.3 275.2 184.7 C278.9 176.1 277.9 180.6 280.5 171.7 C283.2 162.8 282.0 167.2 283.1 157.9 C284.3 148.6 284.0 153.2 284.0 143.9 C284.0 134.5 284.3 139.1 283.3 129.8 C282.3 120.5 283.1 125.1 281.0 116.0 C278.9 106.9 280.1 111.3 276.9 102.5 C273.8 93.7 275.7 97.9 271.4 89.6 C267.2 81.3 269.7 85.1 264.2 77.6 C258.6 70.2 259.5 75.0 254.8 67.2 C250.1 59.3 252.0 63.1 250.0 54.1 C247.9 45.1 249.4 49.5 248.6 40.1 C247.9 30.8 248.2 35.5 247.7 26.1 C247.3 16.7 246.8 21.4 247.3 12.1 C247.7 2.7 243.5 2.5 249.0 -2.0 Z"/>
    <g clip-path="url(#chL)">
      <g filter="url(#b3)">
        <path fill="#7f5d48" opacity=".7" d="M215 8 C185 26 168 58 158 90 C152 110 146 128 140 146 L156 146 C162 114 174 82 190 58 C200 40 214 26 232 14 Z"/>
        <path fill="#2a1811" opacity=".6" d="M243 2 L250 2 L248 60 L230 62 Z"/>
        <path fill="#2a1811" opacity=".55" d="M178 140 C172 176 178 200 186 214 L166 244 C156 220 156 186 164 152 Z"/>
        <path fill="#7a5844" opacity=".6" d="M128 190 C140 210 136 232 124 252 C118 272 122 292 118 312 L108 312 C108 292 106 272 114 252 C122 234 124 212 120 194 Z"/>
        <path fill="#25140e" opacity=".5" d="M150 250 C140 270 134 290 136 312 L126 344 C118 322 120 290 128 270 C134 258 140 250 144 244 Z"/>
        <path fill="#25140e" opacity=".5" d="M120 130 C124 150 136 162 138 180 L150 176 C146 156 136 144 134 124 Z"/>
        <path fill="#1f100b" opacity=".6" d="M150 200 C160 214 168 226 160 244 C150 262 138 280 136 300 L124 296 C128 274 140 258 146 240 C150 226 144 214 138 204 Z"/>
        <path fill="#1f100b" opacity=".55" d="M104 300 C110 318 104 338 96 356 L110 366 C122 350 128 330 124 306 Z"/>
        <path fill="#1f100b" opacity=".5" d="M172 196 C178 210 186 220 184 232 L168 246 C166 230 162 214 160 200 Z"/>
      </g>
      <g fill="none" stroke-linecap="round" filter="url(#b05)">
<path d="M249.1 -2.0 C239.0 -1.6 238.4 -4.5 218.9 -0.7 C199.4 3.0 207.8 -0.7 190.5 9.2 C173.1 19.1 180.0 13.6 166.8 29.1 C153.6 44.5 160.4 37.3 150.7 55.6 C141.1 73.9 145.5 64.7 137.8 83.9 C130.1 103.0 133.2 93.3 127.6 113.1 C122.0 132.9 121.8 123.1 121.0 143.3 C120.1 163.5 125.9 153.9 125.0 173.7 C124.1 193.5 123.0 182.9 118.3 202.7 C113.7 222.4 116.3 212.9 111.2 232.9 C106.0 252.9 107.0 243.1 103.0 262.7 C99.0 282.3 99.5 275.2 99.1 291.6 C98.8 308.0 100.9 305.2 101.8 312.0" stroke="#3b261d" stroke-width="1.3" opacity="0.69"/>
<path d="M249.1 -2.0 C239.0 -1.6 238.4 -4.5 218.9 -0.7 C199.4 3.0 207.8 -0.7 190.5 9.2 C173.1 19.1 180.0 13.6 166.8 29.1 C153.6 44.5 160.4 37.3 150.7 55.6 C141.1 73.9 145.7 64.7 137.9 83.9 C130.0 103.0 133.1 93.3 127.3 113.1 C121.4 132.9 121.1 123.1 120.3 143.3 C119.4 163.5 125.1 153.9 124.7 173.7 C124.4 193.5 123.3 182.9 119.2 202.7 C115.2 222.4 117.8 212.9 112.6 232.9 C107.3 252.9 108.3 243.1 103.4 262.7 C98.5 282.3 99.6 271.8 97.9 291.6 C96.2 311.4 100.0 301.9 98.2 322.1 C96.4 342.3 94.4 342.2 92.5 352.3" stroke="#795742" stroke-width="2.1" opacity="0.30"/>
<path d="M249.1 -2.0 C239.2 -1.4 238.6 -4.2 219.4 -0.3 C200.1 3.7 208.6 0.0 191.3 10.0 C174.0 20.0 180.9 14.3 167.5 29.7 C154.2 45.0 161.1 37.9 151.4 56.1 C141.7 74.3 146.2 65.2 138.4 84.4 C130.6 103.6 133.7 93.8 128.0 113.6 C122.4 133.5 122.1 123.6 121.5 143.8 C120.8 164.1 126.6 154.5 126.1 174.3 C125.6 194.0 124.5 183.5 120.0 203.2 C115.6 222.8 118.2 213.3 112.8 233.3 C107.3 253.2 108.3 243.4 103.6 263.0 C98.9 282.6 100.0 272.2 98.6 292.0 C97.2 311.8 101.1 302.3 99.2 322.5 C97.4 342.6 96.0 339.2 93.1 352.6 C90.3 365.9 91.5 359.2 90.8 362.5" stroke="#33201a" stroke-width="1.4" opacity="0.49"/>
<path d="M249.1 -2.0 C239.5 -1.1 239.0 -3.9 220.2 0.6 C201.5 5.0 209.9 1.3 192.8 11.4 C175.7 21.4 182.3 15.5 168.9 30.7 C155.4 45.9 162.3 38.8 152.5 57.0 C142.8 75.2 147.2 66.1 139.6 85.3 C132.0 104.5 135.1 94.7 129.8 114.6 C124.5 134.4 124.4 124.6 123.7 144.8 C123.0 165.0 128.8 155.5 127.7 175.2 C126.6 195.0 125.3 184.5 120.4 204.1 C115.4 223.6 117.9 214.1 112.9 233.9 C107.8 253.8 108.9 244.1 105.2 263.6 C101.5 283.2 102.9 272.8 101.7 292.6 C100.5 312.5 101.6 313.0 101.6 323.1" stroke="#795742" stroke-width="1.8" opacity="0.20"/>
<path d="M249.2 -2.0 C239.7 -1.0 239.2 -3.7 220.8 1.1 C202.3 5.8 210.7 2.1 193.7 12.2 C176.7 22.3 183.1 16.2 169.6 31.3 C156.2 46.4 162.9 39.3 153.2 57.5 C143.5 75.7 148.1 66.6 140.5 85.8 C132.9 105.0 136.1 95.3 130.5 115.2 C124.9 135.0 124.6 125.2 123.8 145.4 C122.9 165.6 128.5 156.1 128.0 175.8 C127.6 195.5 126.5 185.1 122.4 204.6 C118.4 224.1 121.2 214.6 115.8 234.4 C110.4 254.2 112.1 247.8 106.1 264.0 C100.1 280.2 100.5 276.6 97.7 282.9" stroke="#3b261d" stroke-width="0.9" opacity="0.41"/>
<path d="M249.2 -2.0 C239.8 -0.9 239.3 -3.6 221.0 1.3 C202.6 6.2 211.1 2.5 194.1 12.6 C177.1 22.6 183.5 16.5 170.0 31.6 C156.5 46.6 163.3 39.6 153.5 57.8 C143.8 75.9 148.3 66.8 140.8 86.1 C133.2 105.3 136.3 95.6 130.9 115.4 C125.5 135.3 125.3 125.5 124.5 145.7 C123.8 165.9 129.3 156.3 128.7 176.1 C128.0 195.8 126.8 185.3 122.5 204.8 C118.1 224.3 120.9 214.8 115.6 234.6 C110.3 254.3 111.6 244.6 106.6 264.2 C101.5 283.7 102.5 283.5 100.4 293.2" stroke="#1a0e09" stroke-width="1.3" opacity="0.58"/>
<path d="M249.3 -2.0 C240.2 -0.6 239.8 -3.1 222.0 2.3 C204.2 7.7 212.7 4.0 195.9 14.2 C179.0 24.3 185.2 17.9 171.5 32.7 C157.9 47.6 164.7 40.7 154.9 58.8 C145.1 76.9 149.6 67.9 142.2 87.1 C134.7 106.4 137.7 96.7 132.5 116.5 C127.2 136.4 127.0 126.6 126.5 146.8 C125.9 167.0 131.6 157.5 130.8 177.2 C129.9 196.9 128.8 186.5 124.0 205.9 C119.3 225.3 122.0 215.7 116.6 235.4 C111.2 255.0 112.6 245.3 107.9 264.9 C103.3 284.4 104.7 274.1 102.7 294.0 C100.6 313.8 105.1 304.5 101.8 324.4 C98.5 344.4 95.8 344.0 92.8 353.8" stroke="#8e6a54" stroke-width="1.1" opacity="0.21"/>
<path d="M249.3 -2.0 C240.3 -0.5 239.9 -3.0 222.3 2.6 C204.7 8.1 213.1 4.5 196.4 14.6 C179.6 24.8 185.7 18.3 172.0 33.1 C158.3 47.9 165.1 41.0 155.3 59.1 C145.5 77.2 150.1 68.2 142.5 87.4 C135.0 106.7 137.8 97.0 132.6 116.9 C127.4 136.8 127.0 126.9 126.8 147.1 C126.6 167.4 132.3 157.8 131.9 177.5 C131.5 197.2 130.5 186.8 125.6 206.2 C120.7 225.6 123.5 216.0 117.3 235.6 C111.0 255.2 112.2 245.5 106.9 265.1 C101.6 284.6 102.8 274.4 101.3 294.2 C99.8 314.1 104.3 304.8 102.3 324.7 C100.3 344.6 97.7 344.2 95.4 353.9" stroke="#86624c" stroke-width="2.3" opacity="0.28"/>
<path d="M249.3 -2.0 C240.5 -0.3 240.2 -2.7 222.9 3.2 C205.7 9.1 214.2 5.5 197.5 15.7 C180.8 25.9 186.8 19.2 173.0 33.9 C159.2 48.6 166.0 41.7 156.1 59.8 C146.2 77.9 150.8 68.9 143.3 88.1 C135.8 107.4 138.6 97.7 133.7 117.6 C128.8 137.5 128.7 127.7 128.6 147.9 C128.6 168.1 134.4 158.6 133.6 178.3 C132.7 197.9 131.6 187.6 126.1 206.9 C120.7 226.2 123.2 216.6 117.1 236.1 C110.9 255.7 113.0 249.4 107.7 265.6 C102.4 281.7 103.4 278.3 101.2 284.6" stroke="#1a0e09" stroke-width="0.9" opacity="0.46"/>
<path d="M162.2 51.5 C157.6 60.8 156.5 60.3 148.3 79.3 C140.1 98.3 143.4 88.8 137.6 108.5 C131.9 128.3 132.6 118.4 130.9 138.6 C129.2 158.8 131.9 149.1 132.5 169.2 C133.1 189.2 136.5 179.3 132.7 198.6 C128.8 217.9 127.9 207.7 120.9 226.9 C114.0 246.2 118.1 237.0 111.7 256.4 C105.3 275.8 103.2 265.4 101.7 285.2 C100.1 304.9 107.7 295.7 107.0 315.6 C106.3 335.6 104.4 328.9 99.6 345.1 C94.8 361.3 94.9 357.8 92.6 364.2" stroke="#33201a" stroke-width="0.8" opacity="0.47"/>
<path d="M249.4 -2.0 C241.1 0.2 240.8 -2.1 224.4 4.6 C207.9 11.2 216.4 7.7 200.0 18.0 C183.6 28.3 189.2 21.1 175.2 35.6 C161.2 50.0 168.0 43.2 158.1 61.3 C148.2 79.3 152.7 70.3 145.5 89.6 C138.2 109.0 141.1 99.2 136.3 119.2 C131.4 139.1 131.2 129.3 131.0 149.5 C130.7 169.7 136.4 160.2 135.5 179.9 C134.6 199.5 133.4 189.2 128.2 208.4 C123.1 227.5 125.7 217.9 120.0 237.3 C114.3 256.7 115.8 247.1 111.1 266.6 C106.3 286.1 107.9 275.9 105.8 295.8 C103.7 315.7 108.6 306.5 104.7 326.2 C100.7 345.9 98.7 342.2 93.9 354.9 C89.2 367.7 91.6 361.3 90.4 364.4" stroke="#6b4c3a" stroke-width="1.8" opacity="0.28"/>
<path d="M249.4 -2.0 C241.2 0.3 241.1 -1.9 224.9 5.0 C208.7 12.0 217.2 8.4 200.9 18.8 C184.5 29.1 190.0 21.8 175.9 36.1 C161.9 50.5 168.7 43.8 158.7 61.8 C148.7 79.8 153.2 70.8 146.0 90.2 C138.8 109.5 141.7 99.8 137.1 119.7 C132.5 139.7 132.3 129.8 132.2 150.0 C132.0 170.3 137.6 160.8 136.7 180.4 C135.8 200.0 134.8 189.8 129.5 208.9 C124.3 228.0 127.3 218.3 121.0 237.7 C114.7 257.0 116.2 247.4 110.6 266.9 C105.1 286.4 106.2 276.3 104.3 296.2 C102.4 316.1 107.3 306.9 104.9 326.6 C102.6 346.3 100.7 342.5 97.1 355.2 C93.5 367.8 95.1 361.5 94.1 364.6" stroke="#86624c" stroke-width="2.1" opacity="0.23"/>
<path d="M169.8 44.4 C164.7 53.4 163.5 52.7 154.5 71.3 C145.5 89.9 149.3 80.6 142.8 100.2 C136.3 119.8 138.2 110.0 135.0 130.1 C131.7 150.2 131.6 140.4 133.1 160.6 C134.6 180.8 141.6 171.3 139.5 190.7 C137.4 210.0 134.2 199.6 126.8 218.6 C119.4 237.6 124.5 228.4 117.2 247.6 C110.0 266.9 108.5 256.6 105.1 276.3 C101.7 295.9 107.7 286.5 107.1 306.6 C106.6 326.6 107.9 317.1 103.4 336.5 C99.0 355.8 97.1 355.3 93.9 364.7" stroke="#9a745b" stroke-width="0.8" opacity="0.21"/>
<path d="M249.5 -2.0 C241.6 0.7 241.5 -1.4 225.9 6.1 C210.3 13.6 218.8 10.0 202.7 20.5 C186.6 30.9 191.7 23.3 177.5 37.4 C163.3 51.5 170.2 44.9 160.1 62.9 C150.0 80.8 154.6 71.9 147.3 91.3 C140.0 110.6 142.5 100.9 138.3 120.9 C134.1 140.9 134.0 131.0 134.7 151.2 C135.3 171.5 141.4 162.0 140.2 181.6 C139.1 201.2 137.9 191.0 131.2 210.0 C124.6 229.0 126.9 219.3 120.3 238.5 C113.7 257.7 115.4 248.2 111.4 267.7 C107.3 287.2 109.4 277.1 108.2 297.0 C107.0 316.9 112.2 307.9 107.8 327.4 C103.3 347.0 100.5 343.2 94.9 355.7 C89.3 368.2 92.2 361.9 90.9 365.0" stroke="#795742" stroke-width="2.3" opacity="0.23"/>
<path d="M249.5 -2.0 C241.9 0.9 241.8 -1.1 226.6 6.8 C211.4 14.6 219.9 11.1 203.9 21.6 C187.9 32.1 192.9 24.2 178.6 38.2 C164.3 52.2 171.1 45.7 161.1 63.6 C151.0 81.5 155.6 72.6 148.5 92.0 C141.4 111.4 144.1 101.7 139.9 121.7 C135.6 141.7 135.4 131.8 135.7 152.0 C135.9 172.3 141.7 162.8 140.6 182.4 C139.4 201.9 138.4 191.8 132.3 210.7 C126.3 229.6 129.0 219.9 122.5 239.1 C116.0 258.2 117.7 248.7 112.9 268.2 C108.1 287.7 109.7 277.6 108.1 297.6 C106.5 317.5 111.9 308.5 108.0 327.9 C104.2 347.4 101.7 343.6 96.5 356.0 C91.3 368.5 93.8 362.2 92.5 365.3" stroke="#33201a" stroke-width="1.9" opacity="0.58"/>
<path d="M249.6 -2.0 C242.1 1.1 242.1 -0.9 227.1 7.2 C212.2 15.4 220.7 11.9 204.8 22.4 C188.9 32.9 193.7 24.9 179.4 38.8 C165.0 52.7 171.8 46.2 161.7 64.1 C151.7 82.0 156.3 73.2 149.2 92.5 C142.1 111.9 144.7 102.2 140.5 122.3 C136.2 142.3 136.0 132.4 136.4 152.6 C136.7 172.8 142.5 163.4 141.6 182.9 C140.7 202.5 139.6 192.4 133.7 211.2 C127.7 230.1 130.4 220.4 123.8 239.5 C117.1 258.6 118.8 249.0 113.6 268.5 C108.4 288.0 110.1 278.0 108.2 298.0 C106.3 317.9 111.8 308.9 107.9 328.3 C103.9 347.8 101.5 343.9 96.4 356.3 C91.4 368.6 93.9 362.4 92.6 365.4" stroke="#3b261d" stroke-width="2.0" opacity="0.62"/>
<path d="M220.7 11.9 C212.9 17.5 212.9 16.9 197.2 28.8 C181.6 40.6 186.8 32.2 173.7 47.4 C160.6 62.5 167.0 55.5 158.0 74.1 C149.0 92.7 152.8 83.4 146.6 103.1 C140.3 122.7 141.9 112.9 139.3 133.1 C136.7 153.3 136.9 143.4 138.8 163.6 C140.7 183.8 147.7 174.5 145.1 193.7 C142.5 212.9 139.5 202.5 131.1 221.1 C122.6 239.8 127.3 230.6 119.7 249.6 C112.0 268.7 110.9 258.6 108.1 278.3 C105.3 297.9 111.6 288.6 111.4 308.7 C111.1 328.7 113.2 319.3 107.4 338.3 C101.6 357.3 98.4 356.6 93.9 365.7" stroke="#8e6a54" stroke-width="1.8" opacity="0.42"/>
<path d="M249.6 -2.0 C242.5 1.4 242.6 -0.4 228.3 8.3 C214.0 17.1 222.5 13.6 206.8 24.2 C191.1 34.9 195.6 26.5 181.1 40.2 C166.6 53.9 173.4 47.4 163.2 65.3 C153.1 83.1 157.8 74.3 150.8 93.7 C143.8 113.2 146.4 103.5 142.3 123.5 C138.2 143.6 137.9 133.7 138.5 153.9 C139.1 174.1 144.8 164.7 144.0 184.2 C143.2 203.7 142.3 193.7 136.2 212.4 C130.1 231.2 133.0 221.4 125.7 240.4 C118.4 259.4 120.3 249.9 114.4 269.3 C108.5 288.8 110.1 278.9 108.1 298.8 C106.2 318.8 111.7 309.9 108.6 329.2 C105.4 348.5 103.0 344.6 98.6 356.8 C94.2 369.0 96.3 362.9 95.2 365.9" stroke="#9a745b" stroke-width="2.0" opacity="0.39"/>
<path d="M249.7 -2.0 C242.7 1.6 242.8 -0.2 228.8 8.8 C214.8 17.8 223.3 14.4 207.6 25.0 C192.0 35.7 196.4 27.2 181.9 40.7 C167.3 54.3 174.1 47.9 163.9 65.8 C153.7 83.6 158.3 74.8 151.4 94.3 C144.5 113.7 147.0 104.0 143.2 124.1 C139.4 144.1 139.3 134.2 140.0 154.5 C140.7 174.7 146.5 165.3 145.3 184.8 C144.0 204.3 143.0 194.3 136.3 212.9 C129.6 231.6 132.3 221.9 125.0 240.8 C117.8 259.7 119.6 250.2 114.7 269.7 C109.7 289.2 110.8 282.6 110.2 299.2 C109.7 315.8 112.0 312.7 112.9 319.5" stroke="#33201a" stroke-width="2.0" opacity="0.67"/>
<path d="M249.7 -2.0 C242.9 1.8 243.0 0.0 229.3 9.3 C215.6 18.6 224.1 15.2 208.6 25.9 C193.0 36.5 197.3 27.9 182.7 41.4 C168.0 54.9 174.8 48.5 164.6 66.3 C154.4 84.1 158.9 75.4 151.9 94.8 C145.0 114.3 147.3 104.6 143.7 124.7 C140.0 144.7 139.8 134.8 141.0 155.1 C142.2 175.3 148.1 165.9 147.2 185.4 C146.3 204.8 145.4 194.9 138.3 213.5 C131.2 232.1 134.0 222.3 125.9 241.2 C117.8 260.1 119.5 250.6 113.9 270.1 C108.4 289.5 110.0 279.7 109.1 299.6 C108.3 319.6 114.1 310.7 111.4 330.0 C108.7 349.2 105.8 345.2 100.9 357.3 C96.1 369.4 98.3 363.3 96.9 366.2" stroke="#2a1912" stroke-width="1.7" opacity="0.64"/>
<path d="M249.7 -2.0 C243.1 2.0 243.3 0.3 229.9 9.9 C216.6 19.6 225.1 16.2 209.7 26.9 C194.2 37.6 198.4 28.8 183.6 42.1 C168.9 55.5 175.7 49.2 165.4 67.0 C155.2 84.8 159.6 76.0 152.8 95.5 C145.9 114.9 148.3 105.3 144.9 125.4 C141.6 145.5 141.6 135.5 142.8 155.8 C144.0 176.0 150.0 166.6 148.5 186.1 C147.0 205.5 145.9 195.6 138.2 214.2 C130.6 232.7 133.1 222.9 125.5 241.7 C117.9 260.5 119.8 251.1 115.5 270.5 C111.2 290.0 113.2 280.1 112.6 300.1 C112.0 320.1 118.2 311.3 113.7 330.4 C109.2 349.6 105.7 345.6 99.0 357.6 C92.4 369.6 95.5 363.5 93.8 366.5" stroke="#33201a" stroke-width="0.9" opacity="0.38"/>
<path d="M249.8 -2.0 C243.4 2.2 243.6 0.6 230.5 10.5 C217.5 20.4 226.0 17.1 210.7 27.8 C195.3 38.6 199.3 29.6 184.5 42.8 C169.7 56.1 176.5 49.8 166.2 67.6 C156.0 85.4 160.6 76.6 153.8 96.1 C146.9 115.6 149.2 105.9 145.7 126.0 C142.1 146.1 141.9 136.2 143.1 156.4 C144.4 176.7 150.3 167.3 149.4 186.7 C148.5 206.2 147.7 196.3 140.4 214.8 C133.1 233.2 135.7 223.5 127.4 242.2 C119.2 260.9 120.9 251.5 115.7 270.9 C110.4 290.4 112.4 280.6 111.7 300.6 C111.0 320.5 114.3 317.7 113.7 330.9 C113.1 344.1 111.1 337.0 109.8 340.1" stroke="#2a1912" stroke-width="1.5" opacity="0.48"/>
<path d="M249.8 -2.0 C243.6 2.4 243.9 0.9 231.2 11.2 C218.6 21.5 227.1 18.2 211.9 29.0 C196.7 39.8 200.5 30.6 185.6 43.7 C170.7 56.8 177.5 50.6 167.2 68.3 C156.8 86.1 161.3 77.4 154.5 96.9 C147.8 116.4 150.0 106.7 147.0 126.8 C143.9 146.9 144.0 137.0 145.3 157.2 C146.7 177.5 152.7 168.1 151.0 187.5 C149.3 207.0 148.1 197.1 140.3 215.5 C132.5 233.9 135.0 224.1 127.6 242.8 C120.2 261.4 122.5 252.0 118.0 271.4 C113.6 290.9 115.8 281.1 114.2 301.1 C112.7 321.1 113.6 321.3 113.4 331.4" stroke="#86624c" stroke-width="1.9" opacity="0.39"/>
<path d="M249.9 -2.0 C243.9 2.6 244.1 1.1 231.8 11.8 C219.5 22.4 228.1 19.1 213.0 29.9 C197.9 40.8 201.5 31.4 186.5 44.4 C171.5 57.4 178.3 51.2 168.0 68.9 C157.7 86.7 162.2 78.0 155.7 97.5 C149.1 117.0 151.6 107.3 148.2 127.5 C144.9 147.6 144.8 137.7 145.7 157.9 C146.6 178.2 152.3 168.8 151.0 188.2 C149.8 207.6 148.8 197.8 141.9 216.1 C135.1 234.5 138.1 224.7 130.5 243.2 C122.9 261.8 125.1 252.4 119.2 271.9 C113.2 291.3 114.9 281.6 112.6 301.6 C110.3 321.6 113.8 318.7 112.3 331.9 C110.9 345.0 109.6 338.0 108.3 341.0" stroke="#86624c" stroke-width="0.9" opacity="0.34"/>
<path d="M249.9 -2.0 C244.2 2.8 244.5 1.5 232.6 12.5 C220.8 23.6 229.3 20.3 214.4 31.2 C199.4 42.2 202.9 32.5 187.8 45.3 C172.7 58.2 179.4 52.1 169.0 69.8 C158.7 87.4 163.2 78.8 156.7 98.3 C150.2 117.9 152.7 108.2 149.6 128.4 C146.5 148.5 146.3 138.6 147.3 158.8 C148.4 179.1 153.9 169.7 152.7 189.1 C151.4 208.5 150.5 198.7 143.5 217.0 C136.6 235.2 139.8 225.4 131.8 243.9 C123.8 262.4 126.0 253.0 119.6 272.4 C113.2 291.9 114.6 282.2 112.6 302.2 C110.6 322.2 114.5 319.4 113.6 332.5 C112.8 345.6 111.3 338.5 110.1 341.6" stroke="#1a0e09" stroke-width="1.6" opacity="0.38"/>
<path d="M249.9 -2.0 C244.3 3.0 244.7 1.7 233.1 13.0 C221.5 24.3 230.0 21.0 215.1 31.9 C200.3 42.9 203.6 33.1 188.4 45.9 C173.3 58.6 180.1 52.6 169.6 70.2 C159.2 87.9 163.6 79.3 157.1 98.8 C150.5 118.3 152.7 108.7 150.1 128.9 C147.4 149.0 147.5 139.1 149.0 159.3 C150.5 179.6 156.4 170.2 154.5 189.6 C152.6 209.0 151.4 199.2 143.4 217.4 C135.4 235.6 138.1 225.8 130.5 244.2 C122.9 262.7 125.5 253.3 120.7 272.8 C115.8 292.2 118.0 282.5 116.0 302.5 C113.9 322.6 116.8 319.7 114.6 332.8 C112.5 345.9 111.2 338.9 109.5 341.9" stroke="#3b261d" stroke-width="0.9" opacity="0.44"/>
<path d="M250.0 -2.0 C244.6 3.2 245.0 1.9 233.7 13.6 C222.5 25.3 231.0 22.0 216.3 33.0 C201.5 44.0 204.7 34.0 189.4 46.6 C174.2 59.3 180.9 53.3 170.5 70.9 C160.1 88.5 164.8 79.9 158.2 99.5 C151.6 119.0 153.7 109.4 150.7 129.6 C147.7 149.8 147.3 139.8 149.1 160.1 C150.9 180.3 156.9 171.0 156.1 190.3 C155.3 209.7 154.7 200.0 146.8 218.1 C138.8 236.2 141.5 226.4 132.2 244.8 C122.8 263.1 124.6 253.8 118.6 273.2 C112.7 292.6 114.5 283.0 114.3 303.0 C114.1 323.1 121.3 314.5 117.9 333.3 C114.6 352.1 110.7 347.9 104.2 359.4 C97.8 371.0 100.5 365.1 98.6 367.9" stroke="#795742" stroke-width="1.8" opacity="0.27"/>
<path d="M250.0 -2.0 C244.7 3.3 245.1 2.1 234.1 13.9 C223.1 25.8 231.6 22.5 216.9 33.5 C202.2 44.6 205.3 34.5 190.0 47.0 C174.7 59.6 181.4 53.7 171.0 71.3 C160.5 88.9 165.2 80.3 158.6 99.9 C152.1 119.4 154.2 109.8 151.4 130.0 C148.5 150.2 148.2 140.2 150.0 160.5 C151.7 180.7 157.6 171.4 156.6 190.7 C155.6 210.1 154.9 200.4 147.0 218.5 C139.1 236.6 142.0 226.7 132.9 245.0 C123.9 263.4 126.0 254.1 119.9 273.5 C113.7 292.9 116.3 293.4 114.6 303.3" stroke="#6b4c3a" stroke-width="2.3" opacity="0.22"/>
<path d="M250.1 -2.0 C245.0 3.5 245.4 2.4 234.8 14.6 C224.2 26.9 232.7 23.6 218.1 34.7 C203.5 45.8 206.4 35.4 191.0 47.9 C175.6 60.3 182.4 54.4 171.9 72.0 C161.4 89.6 166.1 81.0 159.6 100.6 C153.1 120.2 155.2 110.5 152.4 130.8 C149.5 151.0 149.3 141.0 151.1 161.3 C152.9 181.5 158.7 172.2 157.8 191.5 C156.9 210.8 156.0 201.2 148.3 219.2 C140.7 237.2 143.6 227.4 134.7 245.6 C125.9 263.9 128.2 254.6 121.8 274.0 C115.3 293.4 117.3 283.8 115.3 303.9 C113.3 323.9 120.2 315.4 115.9 334.1 C111.5 352.8 108.2 348.5 102.2 359.9 C96.1 371.3 99.2 365.5 97.7 368.3" stroke="#86624c" stroke-width="1.8" opacity="0.39"/>
<path d="M160.4 101.3 C158.2 111.3 156.1 111.2 153.7 131.5 C151.3 151.7 151.3 141.7 153.2 162.0 C155.1 182.2 161.0 172.9 159.4 192.2 C157.8 211.5 156.8 201.9 148.3 219.9 C139.9 237.8 142.8 227.9 134.2 246.1 C125.5 264.3 128.1 255.0 122.5 274.4 C116.9 293.8 119.0 284.3 117.4 304.3 C115.9 324.4 122.7 316.0 117.9 334.6 C113.1 353.2 109.6 348.9 103.0 360.2 C96.4 371.6 99.7 365.8 98.1 368.5" stroke="#795742" stroke-width="1.8" opacity="0.30"/>
<path d="M250.1 -2.0 C245.5 4.0 246.1 3.0 236.2 16.0 C226.3 28.9 234.9 25.7 220.5 36.9 C206.2 48.1 208.7 37.3 193.1 49.5 C177.6 61.7 184.3 55.9 173.8 73.4 C163.2 90.9 167.8 82.4 161.5 102.1 C155.2 121.7 157.3 112.0 154.8 132.3 C152.4 152.6 152.1 142.6 154.1 162.8 C156.1 183.1 162.0 173.8 160.9 193.1 C159.7 212.3 159.1 202.8 150.6 220.6 C142.2 238.5 145.0 228.6 135.5 246.7 C125.9 264.8 128.0 255.6 122.1 275.0 C116.1 294.4 119.1 294.9 117.6 304.9" stroke="#1a0e09" stroke-width="0.8" opacity="0.55"/>
<path d="M250.2 -2.0 C245.6 4.1 246.2 3.1 236.5 16.3 C226.8 29.4 235.3 26.2 221.1 37.4 C206.8 48.6 209.2 37.8 193.6 49.9 C178.0 62.0 184.8 56.2 174.2 73.7 C163.5 91.2 168.0 82.7 161.7 102.4 C155.5 122.0 157.6 112.4 155.5 132.6 C153.5 152.9 153.7 142.9 155.7 163.2 C157.7 183.4 163.7 174.2 161.6 193.4 C159.6 212.7 158.5 203.1 149.5 221.0 C140.6 238.8 143.3 228.9 134.9 247.0 C126.5 265.0 129.5 259.2 124.2 275.2 C119.0 291.1 120.9 288.3 119.2 294.9" stroke="#8e6a54" stroke-width="1.0" opacity="0.49"/>
<path d="M250.2 -2.0 C245.8 4.3 246.5 3.4 237.1 16.8 C227.7 30.3 236.3 27.1 222.1 38.3 C207.9 49.6 210.2 38.6 194.5 50.6 C178.8 62.6 185.5 56.9 174.9 74.4 C164.4 91.8 168.8 83.4 162.7 103.0 C156.7 122.6 158.9 113.0 156.7 133.3 C154.6 153.6 154.6 143.6 156.3 163.8 C158.1 184.1 163.8 174.8 162.0 194.1 C160.2 213.3 159.2 203.8 151.0 221.6 C142.7 239.4 145.8 229.4 137.3 247.4 C128.7 265.4 131.5 256.2 125.3 275.6 C119.2 295.0 121.1 285.5 118.9 305.6 C116.6 325.7 123.6 317.4 118.5 335.8 C113.4 354.3 110.1 349.9 103.6 361.0 C97.1 372.1 100.5 366.4 99.0 369.2" stroke="#6b4c3a" stroke-width="1.6" opacity="0.29"/>
<path d="M250.3 -2.0 C246.2 4.6 246.9 3.8 238.0 17.7 C229.2 31.7 237.7 28.5 223.7 39.8 C209.7 51.1 211.8 39.8 195.9 51.7 C180.1 63.5 186.8 57.9 176.2 75.3 C165.5 92.7 170.1 84.3 164.0 104.0 C157.9 123.6 159.9 114.0 158.0 134.3 C156.0 154.6 155.9 144.6 158.1 164.9 C160.2 185.1 166.1 175.9 164.4 195.1 C162.7 214.3 161.8 204.9 152.9 222.5 C144.0 240.2 146.8 230.3 137.7 248.2 C128.5 266.1 131.1 256.9 125.5 276.3 C119.8 295.6 122.1 286.2 120.8 306.3 C119.5 326.4 121.3 326.5 121.6 336.5" stroke="#6b4c3a" stroke-width="2.4" opacity="0.43"/>
<path d="M182.4 67.0 C177.6 76.2 175.4 75.4 167.9 94.6 C160.5 113.7 163.4 104.3 160.1 124.5 C156.8 144.8 157.0 135.0 158.0 155.3 C159.0 175.6 162.7 165.6 163.2 185.4 C163.6 205.3 166.3 196.8 159.4 214.9 C152.5 233.0 152.3 222.4 142.5 239.8 C132.6 257.1 137.0 248.1 129.9 266.9 C122.9 285.8 123.3 276.3 121.4 296.3 C119.5 316.3 128.2 307.7 124.4 326.9 C120.5 346.0 118.8 339.4 109.8 353.7 C100.8 367.9 101.5 364.3 97.4 369.7" stroke="#20120d" stroke-width="2.3" opacity="0.69"/>
<path d="M250.3 -2.0 C246.6 4.9 247.3 4.2 239.1 18.7 C230.8 33.2 239.4 30.1 225.5 41.5 C211.7 52.9 213.5 41.3 197.5 52.9 C181.5 64.5 188.3 59.0 177.6 76.4 C166.9 93.8 171.5 85.4 165.4 105.1 C159.3 124.8 161.1 115.2 159.3 135.5 C157.5 155.8 157.3 145.8 159.9 166.1 C162.5 186.3 168.4 177.1 167.0 196.3 C165.7 215.5 165.0 206.1 155.7 223.6 C146.5 241.2 149.4 231.2 139.3 249.0 C129.2 266.8 131.8 257.6 125.5 277.0 C119.3 296.4 121.4 287.0 120.6 307.1 C119.7 327.2 127.6 319.0 123.1 337.3 C118.5 355.6 114.2 351.1 106.9 362.0 C99.5 372.8 103.0 367.3 101.0 369.9" stroke="#6b4c3a" stroke-width="1.6" opacity="0.22"/>
<path d="M169.4 95.7 C166.7 105.7 164.7 105.4 161.4 125.7 C158.0 146.0 157.9 136.2 159.2 156.5 C160.5 176.8 164.2 166.8 165.3 186.6 C166.4 206.5 169.1 198.0 162.4 216.1 C155.8 234.1 155.7 223.5 145.2 240.7 C134.8 257.9 139.0 248.9 131.0 267.7 C122.9 286.5 123.2 277.1 121.0 297.1 C118.8 317.1 127.5 308.6 124.4 327.7 C121.2 346.7 117.8 342.8 111.5 354.3 C105.3 365.8 107.6 359.5 105.6 362.2" stroke="#20120d" stroke-width="2.3" opacity="0.49"/>
<path d="M250.4 -2.0 C246.9 5.2 247.8 4.7 240.0 19.7 C232.3 34.7 240.9 31.6 227.2 43.0 C213.5 54.5 215.1 42.6 199.0 54.0 C182.9 65.5 189.6 60.0 178.9 77.4 C168.1 94.7 172.6 86.4 166.7 106.1 C160.8 125.8 162.6 116.2 161.1 136.6 C159.6 156.9 159.5 146.9 162.2 167.2 C164.8 187.4 170.8 178.2 169.0 197.4 C167.2 216.5 166.5 207.2 156.8 224.6 C147.1 242.1 149.9 232.1 139.9 249.8 C129.9 267.5 132.6 258.3 126.8 277.7 C121.1 297.0 123.3 287.7 122.7 307.9 C122.1 328.0 130.2 319.9 125.0 338.1 C119.8 356.2 115.2 351.7 107.1 362.4 C99.0 373.2 102.8 367.6 100.7 370.3" stroke="#2a1912" stroke-width="1.0" opacity="0.55"/>
<path d="M209.3 50.8 C201.4 57.0 198.4 54.1 185.6 69.5 C172.9 84.9 178.5 77.8 171.0 97.0 C163.5 116.2 166.2 106.8 163.2 127.1 C160.2 147.4 160.1 137.6 162.0 157.9 C163.9 178.2 167.9 168.2 168.9 188.0 C170.0 207.9 172.8 199.6 165.2 217.5 C157.5 235.4 157.5 224.8 146.0 241.8 C134.5 258.9 138.6 249.9 130.6 268.6 C122.6 287.4 124.9 288.3 122.0 298.1" stroke="#20120d" stroke-width="2.1" opacity="0.40"/>
<path d="M250.5 -2.0 C247.5 5.7 248.4 5.3 241.6 21.2 C234.7 37.0 243.3 33.9 229.9 45.5 C216.5 57.1 217.7 44.7 201.3 55.9 C185.0 67.0 191.8 61.7 180.9 79.0 C170.1 96.3 174.7 88.0 168.8 107.7 C162.9 127.5 164.6 117.9 163.2 138.3 C161.9 158.7 161.7 148.6 164.8 168.9 C167.8 189.2 173.9 180.0 172.5 199.1 C171.0 218.2 170.4 208.9 160.5 226.2 C150.5 243.6 153.4 233.5 142.5 251.0 C131.7 268.5 134.3 259.4 127.9 278.8 C121.5 298.1 123.7 288.9 123.3 309.1 C122.9 329.2 131.3 321.2 126.6 339.2 C121.9 357.3 117.1 352.6 109.1 363.2 C101.1 373.7 104.8 368.3 102.6 370.8" stroke="#2a1912" stroke-width="1.2" opacity="0.60"/>
<path d="M250.5 -2.0 C247.7 5.8 248.6 5.5 242.0 21.5 C235.3 37.6 243.9 34.6 230.6 46.2 C217.2 57.8 218.3 45.3 202.0 56.4 C185.6 67.4 192.3 62.1 181.5 79.4 C170.6 96.7 175.3 88.4 169.4 108.1 C163.5 127.9 165.2 118.3 163.9 138.7 C162.6 159.1 162.4 149.1 165.5 169.4 C168.6 189.6 174.7 180.5 173.3 199.6 C171.9 218.7 171.3 209.4 161.3 226.7 C151.2 243.9 154.0 233.9 143.0 251.4 C132.0 268.8 134.6 259.7 128.2 279.1 C121.8 298.4 124.1 289.2 123.9 309.4 C123.6 329.5 128.0 326.7 127.4 339.5 C126.9 352.4 123.9 345.1 122.1 347.9" stroke="#3b261d" stroke-width="1.1" opacity="0.49"/>
<path d="M250.5 -2.0 C247.9 6.0 248.9 5.7 242.5 22.1 C236.2 38.4 244.8 35.4 231.5 47.0 C218.3 58.7 219.2 46.0 202.8 57.0 C186.3 68.0 193.0 62.7 182.2 80.0 C171.3 97.2 176.0 88.9 170.3 108.7 C164.5 128.5 166.2 118.9 164.9 139.3 C163.5 159.7 163.2 149.7 166.3 170.0 C169.3 190.3 175.3 181.1 174.1 200.2 C172.9 219.2 172.6 210.0 162.6 227.2 C152.6 244.4 155.5 234.4 144.1 251.8 C132.7 269.2 135.1 260.1 128.4 279.5 C121.7 298.8 124.0 289.6 124.1 309.8 C124.2 329.9 133.4 322.0 128.8 339.9 C124.1 357.9 118.8 353.2 110.1 363.6 C101.5 374.0 105.2 368.7 102.7 371.2" stroke="#3b261d" stroke-width="2.0" opacity="0.49"/>
<path d="M196.1 64.5 C190.2 73.0 187.6 71.7 178.5 90.1 C169.4 108.5 173.0 99.5 168.8 119.7 C164.7 139.9 165.5 130.2 166.1 150.6 C166.6 171.1 167.8 160.8 170.6 181.0 C173.4 201.2 179.0 192.9 174.6 211.2 C170.1 229.6 168.7 219.3 157.2 236.0 C145.7 252.7 150.2 243.4 140.0 261.3 C129.8 279.2 131.2 270.0 126.6 289.8 C122.0 309.7 127.3 301.1 126.1 320.8 C124.9 340.5 126.1 337.0 123.0 348.9 C119.9 360.8 118.9 354.0 116.9 356.6" stroke="#6b4c3a" stroke-width="2.1" opacity="0.29"/>
<path d="M205.0 58.7 C198.0 66.3 195.0 64.3 184.1 81.4 C173.2 98.6 177.7 90.4 172.2 110.2 C166.6 130.1 168.3 120.5 167.4 140.9 C166.6 161.4 166.5 151.3 169.6 171.6 C172.7 191.9 178.6 182.7 176.7 201.8 C174.8 220.8 174.0 211.7 163.9 228.7 C153.8 245.8 156.8 235.7 146.2 252.9 C135.7 270.2 138.8 261.2 132.2 280.5 C125.6 299.8 128.0 290.7 126.5 310.9 C125.0 331.1 133.6 323.2 127.8 341.0 C121.9 358.8 117.2 354.1 108.8 364.3 C100.4 374.5 104.7 369.3 102.6 371.7" stroke="#8e6a54" stroke-width="1.0" opacity="0.45"/>
<path d="M250.6 -2.0 C248.5 6.6 249.6 6.5 244.3 23.8 C239.0 41.1 247.6 38.1 234.6 49.9 C221.7 61.7 222.2 48.5 205.5 59.1 C188.8 69.7 195.6 64.6 184.6 81.8 C173.6 99.0 178.1 90.8 172.5 110.6 C166.9 130.4 168.4 120.8 167.7 141.3 C167.0 161.8 167.0 151.7 170.5 172.0 C174.0 192.3 180.2 183.1 178.2 202.2 C176.3 221.2 175.7 212.1 164.8 229.1 C153.9 246.1 156.7 236.0 145.6 253.2 C134.5 270.4 137.4 261.4 131.4 280.7 C125.3 300.0 127.9 291.0 127.5 311.2 C127.1 331.4 136.1 323.5 130.2 341.3 C124.3 359.1 119.0 354.3 109.8 364.5 C100.6 374.7 105.0 369.4 102.5 371.9" stroke="#2a1912" stroke-width="1.3" opacity="0.67"/>
<path d="M250.7 -2.0 C248.8 6.8 250.0 6.8 245.0 24.5 C240.1 42.1 248.6 39.2 235.8 51.0 C223.0 62.8 223.4 49.4 206.6 59.9 C189.8 70.4 196.5 65.4 185.5 82.5 C174.5 99.6 179.0 91.5 173.6 111.3 C168.2 131.2 169.8 121.6 169.3 142.1 C168.7 162.6 168.8 152.5 172.0 172.8 C175.2 193.1 181.2 183.9 178.9 202.9 C176.5 221.9 175.8 212.9 164.9 229.8 C154.1 246.8 156.9 236.6 146.3 253.8 C135.8 270.9 138.8 261.9 133.3 281.2 C127.8 300.5 130.4 291.5 129.8 311.7 C129.2 331.9 138.4 324.1 131.5 341.8 C124.7 359.5 119.3 354.7 109.3 364.8 C99.2 374.9 104.1 369.7 101.5 372.1" stroke="#6b4c3a" stroke-width="2.2" opacity="0.32"/>
<path d="M236.7 51.8 C226.9 54.7 224.1 50.1 207.3 60.5 C190.4 70.9 197.2 65.9 186.1 83.0 C175.0 100.1 179.5 92.0 174.1 111.8 C168.6 131.7 170.1 122.1 169.8 142.6 C169.5 163.1 169.6 153.0 173.2 173.3 C176.9 193.6 183.0 184.5 180.7 203.5 C178.3 222.5 177.6 213.4 166.2 230.3 C154.8 247.2 157.6 237.1 146.4 254.2 C135.3 271.2 138.3 262.3 132.7 281.6 C127.2 300.9 129.8 291.9 129.7 312.1 C129.7 332.3 139.0 324.5 132.6 342.2 C126.3 359.8 120.6 355.0 110.7 365.0 C100.7 375.1 105.4 369.9 102.7 372.3" stroke="#6b4c3a" stroke-width="2.2" opacity="0.43"/>
<path d="M250.7 -2.0 C249.2 7.1 250.4 7.2 246.0 25.4 C241.6 43.6 250.2 40.7 237.6 52.6 C225.0 64.5 225.0 50.8 208.1 61.1 C191.2 71.4 197.9 66.5 186.8 83.6 C175.7 100.7 180.2 92.5 174.9 112.4 C169.5 132.3 171.0 122.7 170.8 143.2 C170.5 163.7 170.5 153.6 174.0 173.9 C177.4 194.2 183.4 185.1 181.1 204.1 C178.8 223.1 178.0 214.0 167.2 230.9 C156.3 247.7 159.4 237.6 148.6 254.6 C137.8 271.6 141.2 262.6 134.7 281.9 C128.3 301.2 130.8 292.3 129.3 312.5 C127.8 332.7 136.7 325.0 130.2 342.6 C123.8 360.2 118.9 355.3 109.9 365.3 C101.0 375.3 105.6 370.1 103.4 372.5" stroke="#86624c" stroke-width="1.3" opacity="0.45"/>
<path d="M250.8 -2.0 C249.4 7.3 250.7 7.5 246.6 26.0 C242.6 44.6 251.2 41.7 238.7 53.6 C226.1 65.5 226.1 51.6 209.0 61.8 C192.0 72.0 198.8 67.1 187.6 84.2 C176.5 101.3 181.1 93.1 175.6 113.0 C170.2 132.9 171.5 123.4 171.2 143.9 C171.0 164.4 170.9 154.3 174.9 174.6 C178.8 194.9 184.9 185.8 183.2 204.8 C181.4 223.7 180.9 214.7 169.6 231.5 C158.4 248.3 161.4 238.1 149.4 255.1 C137.4 272.0 140.6 263.1 133.7 282.4 C126.8 301.7 129.3 292.7 128.7 312.9 C128.0 333.2 137.3 325.5 131.8 343.0 C126.2 360.6 118.6 358.1 112.0 365.6" stroke="#33201a" stroke-width="1.5" opacity="0.69"/>
<path d="M210.4 62.9 C203.2 70.3 200.0 68.1 188.9 85.1 C177.7 102.2 182.2 94.1 177.0 114.0 C171.8 133.9 173.3 124.3 173.3 144.9 C173.3 165.4 173.4 155.4 177.1 175.6 C180.7 195.9 186.7 186.8 184.2 205.8 C181.8 224.7 181.0 215.8 169.6 232.5 C158.3 249.1 161.2 239.0 150.2 255.8 C139.2 272.7 142.6 263.7 136.6 283.0 C130.5 302.3 133.3 293.4 132.0 313.6 C130.8 333.9 132.5 333.7 132.8 343.7" stroke="#8e6a54" stroke-width="1.5" opacity="0.44"/>
<path d="M250.9 -2.0 C249.8 7.7 251.2 8.0 247.8 27.2 C244.4 46.3 253.0 43.4 240.7 55.5 C228.4 67.5 228.0 53.2 210.8 63.2 C193.6 73.2 200.3 68.4 189.2 85.4 C178.0 102.4 182.7 94.3 177.4 114.3 C172.1 134.2 173.4 124.6 173.3 145.2 C173.1 165.7 173.1 155.6 176.9 175.9 C180.8 196.2 186.8 187.1 184.9 206.1 C182.9 225.0 182.3 216.1 171.1 232.7 C159.9 249.4 162.9 239.2 151.3 256.0 C139.6 272.8 143.0 263.9 136.2 283.2 C129.5 302.5 132.2 293.6 131.1 313.8 C130.0 334.1 139.6 326.5 133.0 343.9 C126.4 361.4 120.9 356.4 111.2 366.1 C101.5 375.9 106.3 370.8 103.8 373.2" stroke="#6b4c3a" stroke-width="2.3" opacity="0.47"/>
<path d="M221.7 61.0 C213.2 66.5 209.6 62.9 196.2 77.6 C182.7 92.3 188.5 85.7 181.3 105.0 C174.2 124.2 176.7 114.9 174.7 135.5 C172.7 156.0 172.1 146.3 175.4 166.6 C178.6 187.0 183.0 176.8 184.6 196.5 C186.1 216.3 188.8 208.7 180.2 226.0 C171.5 243.3 172.0 232.5 158.5 248.5 C145.1 264.6 149.1 255.7 139.8 274.1 C130.6 292.6 133.8 294.0 130.8 303.9" stroke="#2a1912" stroke-width="2.0" opacity="0.37"/>
<path d="M250.9 -2.0 C250.3 8.1 251.7 8.5 249.0 28.3 C246.3 48.1 254.9 45.3 242.8 57.4 C230.7 69.5 230.0 54.9 212.7 64.6 C195.3 74.4 202.0 69.7 190.8 86.6 C179.6 103.6 184.2 95.6 179.0 115.5 C173.8 135.5 175.1 125.9 175.3 146.5 C175.5 167.1 175.4 157.0 179.5 177.3 C183.5 197.6 189.6 188.5 187.5 207.4 C185.4 226.3 184.8 217.5 173.1 234.0 C161.5 250.5 164.5 240.3 152.6 257.0 C140.6 273.7 144.0 268.3 137.4 284.1 C130.8 299.8 134.3 297.6 132.7 304.3" stroke="#795742" stroke-width="1.3" opacity="0.39"/>
<path d="M182.2 105.7 C180.0 115.8 177.5 115.6 175.7 136.2 C173.8 156.8 173.2 147.0 176.6 167.4 C180.0 187.7 184.4 177.5 186.0 197.3 C187.6 217.1 190.1 209.5 181.3 226.7 C172.6 244.0 173.1 233.2 159.7 249.1 C146.2 265.1 150.3 256.2 141.0 274.6 C131.6 293.0 134.6 291.0 131.5 304.4 C128.3 317.8 131.5 311.4 131.5 314.8" stroke="#9a745b" stroke-width="1.6" opacity="0.24"/>
      </g>
    </g>
    <g clip-path="url(#chR)">
      <g filter="url(#b3)">
        <path fill="#7f5d48" opacity=".6" d="M268 10 C290 36 302 70 308 104 L318 104 C314 66 300 32 284 10 Z"/>
        <path fill="#2a1811" opacity=".6" d="M250 2 L256 2 L262 62 L250 60 Z"/>
        <path fill="#2a1811" opacity=".55" d="M286 140 C292 176 284 200 274 212 L296 252 C308 222 306 190 298 156 Z"/>
        <path fill="#7a5844" opacity=".6" d="M336 158 C350 180 352 200 346 214 C356 232 368 250 362 282 L348 282 C352 256 344 238 334 222 C330 200 334 180 326 162 Z"/>
        <path fill="#24120c" opacity=".55" d="M310 232 C330 250 340 280 338 310 C338 330 344 345 352 352 L330 358 C318 340 314 310 312 290 C310 270 304 250 298 240 Z"/>
        <path fill="#24120c" opacity=".5" d="M322 120 C322 140 330 150 340 156 L334 170 C320 162 312 146 312 124 Z"/>
        <path fill="#1f100b" opacity=".55" d="M300 196 C312 210 326 216 336 232 C344 246 344 262 340 276 L326 270 C328 252 322 240 312 230 C302 220 294 212 290 200 Z"/>
        <path fill="#1f100b" opacity=".5" d="M352 280 C360 300 356 322 350 340 L364 346 C372 324 372 300 366 282 Z"/>
        <path fill="#1f100b" opacity=".5" d="M282 214 C290 230 300 244 304 262 L292 262 C286 246 278 234 272 220 Z"/>
      </g>
      <g fill="none" stroke-linecap="round" filter="url(#b05)">
<path d="M306.9 40.8 C310.0 50.2 311.5 49.8 316.1 69.1 C320.7 88.3 317.6 78.9 320.7 98.5 C323.9 118.1 317.1 111.5 325.5 127.8 C334.0 144.2 336.5 131.8 346.1 147.6 C355.7 163.5 350.0 156.7 354.3 175.4 C358.7 194.1 353.7 185.3 359.1 203.8 C364.6 222.2 365.4 211.9 370.7 230.6 C375.9 249.3 375.2 240.5 374.9 259.8 C374.6 279.1 373.0 269.8 369.6 288.5 C366.2 307.2 367.8 297.1 364.7 315.9 C361.7 334.8 365.3 329.7 360.4 345.1 C355.4 360.5 353.4 356.4 350.0 362.1" stroke="#6b4c3a" stroke-width="1.5" opacity="0.40"/>
<path d="M248.9 -2.0 C258.5 -0.6 261.3 -6.3 277.6 2.1 C293.9 10.5 286.9 7.2 297.8 23.1 C308.8 39.1 303.8 31.5 310.5 50.0 C317.2 68.6 314.1 59.4 317.9 78.8 C321.8 98.3 317.7 89.2 322.0 108.3 C326.2 127.5 320.9 120.2 330.7 136.2 C340.6 152.1 344.2 139.8 351.5 156.2 C358.8 172.5 348.9 166.4 352.7 185.2 C356.4 204.0 355.8 194.3 362.7 212.7 C369.5 231.0 369.2 221.2 373.3 240.2 C377.3 259.2 377.8 250.8 374.8 269.7 C371.9 288.5 367.8 278.0 364.5 296.7 C361.1 315.4 367.4 306.6 364.8 325.8 C362.2 344.9 361.2 342.1 356.6 354.2 C352.1 366.3 352.9 359.5 351.0 362.1" stroke="#86624c" stroke-width="2.4" opacity="0.20"/>
<path d="M248.9 -2.0 C258.3 -0.5 261.0 -6.1 277.1 2.5 C293.1 11.1 286.1 7.7 297.0 23.7 C307.9 39.7 302.9 32.0 309.7 50.5 C316.4 69.0 313.3 59.8 317.2 79.3 C321.1 98.7 317.2 89.6 321.4 108.7 C325.5 127.9 320.2 120.6 329.7 136.6 C339.2 152.6 342.7 140.3 349.9 156.7 C357.1 173.1 347.4 166.9 351.3 185.7 C355.2 204.5 354.8 194.8 361.7 213.1 C368.5 231.4 368.1 221.6 371.9 240.6 C375.7 259.5 375.9 251.2 373.0 270.0 C370.1 288.8 366.1 278.4 363.3 297.1 C360.4 315.8 366.7 307.0 364.5 326.1 C362.3 345.2 361.2 342.4 356.8 354.4 C352.3 366.4 353.1 359.6 351.2 362.1" stroke="#6b4c3a" stroke-width="2.0" opacity="0.43"/>
<path d="M248.9 -2.0 C258.1 -0.4 260.8 -5.9 276.6 2.9 C292.4 11.6 285.5 8.1 296.3 24.1 C307.1 40.2 302.2 32.4 309.0 50.9 C315.8 69.4 312.7 60.2 316.6 79.6 C320.6 99.0 316.6 90.0 320.9 109.1 C325.2 128.2 320.2 120.9 329.6 136.9 C339.0 153.0 342.5 140.7 349.0 157.1 C355.5 173.5 345.7 167.3 349.2 186.1 C352.6 204.9 351.9 195.2 359.3 213.5 C366.6 231.7 366.4 221.9 371.2 240.9 C376.0 259.8 376.4 251.4 373.8 270.3 C371.2 289.1 367.1 278.7 363.3 297.4 C359.5 316.1 365.3 307.3 362.5 326.3 C359.6 345.4 359.0 342.6 354.8 354.5 C350.5 366.5 351.5 359.6 349.8 362.2" stroke="#795742" stroke-width="1.4" opacity="0.44"/>
<path d="M248.8 -2.0 C257.8 -0.2 260.4 -5.5 275.8 3.5 C291.2 12.5 284.4 8.9 295.0 25.0 C305.7 41.1 300.9 33.3 307.8 51.7 C314.6 70.1 311.5 60.9 315.6 80.3 C319.6 99.6 315.7 90.6 319.8 109.7 C323.9 128.8 319.0 121.5 327.8 137.6 C336.7 153.7 339.9 141.5 346.4 158.0 C352.8 174.4 343.2 168.1 347.3 186.9 C351.3 205.6 351.0 196.0 358.5 214.2 C366.0 232.4 365.9 222.6 369.8 241.5 C373.8 260.3 373.8 252.0 370.4 270.8 C367.0 289.6 362.6 279.2 359.5 297.9 C356.5 316.6 362.0 307.8 361.2 326.8 C360.5 345.8 359.9 343.0 357.2 354.8 C354.5 366.6 354.4 359.8 353.0 362.3" stroke="#8e6a54" stroke-width="0.9" opacity="0.33"/>
<path d="M248.8 -2.0 C257.7 -0.0 260.2 -5.3 275.4 3.9 C290.5 13.0 283.7 9.4 294.3 25.5 C304.9 41.6 300.2 33.7 307.1 52.1 C314.0 70.5 310.9 61.4 314.9 80.7 C318.9 100.0 315.1 91.0 319.1 110.0 C323.2 129.1 318.2 121.8 327.1 137.9 C335.9 154.1 339.2 142.0 345.7 158.4 C352.2 174.9 342.9 168.6 346.5 187.3 C350.2 206.0 349.7 196.4 356.7 214.6 C363.6 232.8 363.1 223.0 367.3 241.8 C371.5 260.6 371.5 252.3 369.3 271.1 C367.0 289.9 363.0 279.5 360.6 298.2 C358.1 316.9 363.7 308.2 361.9 327.1 C360.2 346.0 359.1 343.3 355.3 355.0 C351.5 366.7 352.2 359.9 350.6 362.3" stroke="#9a745b" stroke-width="0.9" opacity="0.40"/>
<path d="M248.7 -2.0 C257.4 0.2 259.8 -4.9 274.6 4.5 C289.4 13.9 282.6 10.2 293.1 26.3 C303.5 42.4 299.0 34.5 305.9 52.8 C312.9 71.2 309.8 62.0 313.9 81.3 C318.0 100.6 314.3 91.6 318.3 110.6 C322.4 129.7 317.8 122.3 326.0 138.5 C334.3 154.7 337.3 142.7 343.1 159.2 C348.9 175.7 339.5 169.3 343.4 188.0 C347.3 206.7 347.0 197.2 354.9 215.3 C362.8 233.4 362.7 223.6 367.2 242.3 C371.6 261.1 371.6 252.8 368.3 271.6 C365.1 290.3 360.7 280.0 357.3 298.7 C353.9 317.4 358.8 308.7 358.2 327.5 C357.6 346.4 357.4 343.7 355.5 355.3 C353.6 366.9 353.4 360.0 352.4 362.4" stroke="#8e6a54" stroke-width="1.6" opacity="0.43"/>
<path d="M248.7 -2.0 C257.2 0.3 259.7 -4.8 274.3 4.8 C288.9 14.3 282.1 10.5 292.5 26.6 C302.9 42.8 298.4 34.9 305.4 53.2 C312.4 71.5 309.3 62.3 313.4 81.6 C317.5 100.8 313.6 91.8 317.7 110.9 C321.8 130.0 317.4 122.6 325.8 138.8 C334.3 155.0 337.6 143.0 343.1 159.6 C348.5 176.1 339.0 169.7 342.2 188.3 C345.4 207.0 344.8 197.5 352.7 215.6 C360.6 233.7 360.7 223.9 365.9 242.6 C371.2 261.3 371.5 253.0 368.5 271.8 C365.6 290.6 360.9 280.3 357.1 298.9 C353.4 317.6 357.8 308.9 357.3 327.8 C356.7 346.6 356.9 343.9 355.4 355.4 C353.9 367.0 353.6 360.1 352.7 362.4" stroke="#9a745b" stroke-width="1.8" opacity="0.47"/>
<path d="M248.7 -2.0 C256.9 0.5 259.3 -4.4 273.5 5.4 C287.7 15.3 281.0 11.3 291.2 27.5 C301.5 43.7 297.1 35.7 304.2 53.9 C311.2 72.2 308.2 63.1 312.3 82.3 C316.5 101.5 312.6 92.5 316.6 111.5 C320.7 130.6 316.2 123.2 324.4 139.4 C332.5 155.7 335.7 143.8 341.1 160.4 C346.6 176.9 337.5 170.5 340.6 189.1 C343.8 207.7 343.3 198.3 350.5 216.3 C357.7 234.3 357.2 224.5 362.3 243.2 C367.3 261.8 367.2 253.5 365.7 272.3 C364.3 291.0 360.3 280.8 357.9 299.5 C355.4 318.1 360.1 309.5 358.5 328.2 C356.9 347.0 356.1 344.3 353.1 355.7 C350.0 367.1 350.6 360.2 349.4 362.5" stroke="#2a1912" stroke-width="2.4" opacity="0.65"/>
<path d="M316.3 111.7 C318.8 121.0 315.6 123.3 323.7 139.6 C331.8 155.9 335.0 144.0 340.5 160.6 C346.1 177.2 337.3 170.7 340.4 189.3 C343.5 207.9 342.9 198.5 350.0 216.5 C357.0 234.5 356.3 224.7 361.5 243.3 C366.7 262.0 366.8 253.7 365.5 272.4 C364.2 291.2 360.4 281.0 357.6 299.6 C354.8 318.3 358.9 309.6 357.1 328.4 C355.3 347.1 353.8 346.6 352.2 355.8" stroke="#2a1912" stroke-width="2.4" opacity="0.42"/>
<path d="M248.6 -2.0 C256.5 0.8 258.8 -3.9 272.4 6.3 C286.0 16.5 279.5 12.4 289.5 28.6 C299.6 44.8 295.4 36.8 302.5 54.9 C309.7 73.1 306.6 64.0 310.9 83.2 C315.2 102.3 311.4 93.3 315.3 112.4 C319.3 131.4 315.1 123.9 322.7 140.3 C330.2 156.7 333.2 144.9 338.1 161.5 C342.9 178.1 334.0 171.5 337.2 190.1 C340.4 208.7 340.0 199.3 347.7 217.2 C355.4 235.2 355.0 225.4 360.3 244.0 C365.6 262.5 365.3 254.2 363.6 273.0 C361.8 291.7 357.6 281.5 355.0 300.2 C352.4 318.8 356.0 313.1 355.7 328.9 C355.4 344.7 354.6 341.4 354.1 347.6" stroke="#795742" stroke-width="2.0" opacity="0.41"/>
<path d="M248.6 -2.0 C256.4 0.9 258.6 -3.8 272.1 6.6 C285.5 16.9 279.0 12.8 289.0 29.0 C299.0 45.2 294.9 37.1 302.0 55.3 C309.2 73.4 306.1 64.3 310.4 83.4 C314.8 102.5 311.2 93.6 315.0 112.6 C318.7 131.7 314.5 124.2 321.7 140.5 C328.9 156.9 331.7 145.2 336.5 161.8 C341.3 178.4 332.4 171.8 336.2 190.4 C340.0 209.0 339.7 199.6 347.8 217.5 C355.9 235.4 355.6 225.6 360.5 244.2 C365.5 262.8 363.7 257.2 362.7 273.2 C361.8 289.1 359.4 285.7 357.7 292.0" stroke="#8e6a54" stroke-width="1.2" opacity="0.38"/>
<path d="M248.5 -2.0 C256.2 1.0 258.3 -3.5 271.5 7.0 C284.7 17.5 278.2 13.3 288.1 29.6 C298.0 45.8 294.0 37.7 301.2 55.8 C308.4 73.9 305.4 64.8 309.7 83.9 C314.1 103.0 310.3 94.0 314.2 113.0 C318.1 132.1 314.1 124.5 321.4 141.0 C328.7 157.4 331.6 145.7 336.2 162.4 C340.7 179.0 332.1 172.4 335.0 190.9 C337.9 209.5 337.7 200.1 344.9 218.0 C352.2 235.9 351.6 226.1 356.7 244.6 C361.9 263.1 361.3 254.8 360.4 273.5 C359.5 292.2 355.3 282.1 354.1 300.7 C352.9 319.4 356.9 310.8 356.9 329.4 C356.9 348.0 356.0 345.3 354.1 356.4 C352.2 367.5 352.1 360.6 351.2 362.7" stroke="#9a745b" stroke-width="2.1" opacity="0.28"/>
<path d="M248.5 -2.0 C255.9 1.3 257.9 -3.1 270.6 7.8 C283.3 18.6 276.9 14.2 286.7 30.5 C296.4 46.8 292.5 38.6 299.8 56.7 C307.1 74.7 304.1 65.6 308.5 84.6 C312.8 103.7 309.3 94.7 312.9 113.7 C316.5 132.8 312.4 125.2 319.2 141.7 C326.0 158.2 328.6 146.6 333.3 163.3 C337.9 180.0 329.6 173.3 333.1 191.8 C336.7 210.3 336.6 201.0 343.9 218.8 C351.2 236.6 350.5 226.8 354.9 245.3 C359.3 263.7 358.4 255.4 357.1 274.1 C355.8 292.8 351.6 282.7 351.0 301.4 C350.4 320.0 354.2 311.5 355.3 330.0 C356.3 348.4 355.4 345.8 354.2 356.8 C353.0 367.7 352.5 360.8 351.7 362.8" stroke="#9a745b" stroke-width="1.6" opacity="0.49"/>
<path d="M311.1 104.4 C312.5 114.1 309.3 116.5 315.4 133.5 C321.4 150.4 323.8 138.9 329.3 155.2 C334.8 171.6 329.2 164.1 331.9 182.5 C334.6 201.0 330.8 192.5 337.4 210.5 C343.9 228.4 344.6 218.3 351.5 236.4 C358.4 254.5 357.4 245.8 358.2 264.7 C359.0 283.7 356.4 274.6 353.9 293.2 C351.3 311.8 351.0 302.1 350.6 320.6 C350.2 339.1 352.5 334.6 352.6 348.7 C352.7 362.7 351.5 358.1 350.9 362.8" stroke="#1a0e09" stroke-width="1.3" opacity="0.53"/>
<path d="M248.4 -2.0 C255.6 1.5 257.5 -2.7 269.8 8.4 C282.1 19.6 275.8 15.1 285.4 31.4 C295.0 47.7 291.2 39.4 298.6 57.4 C305.9 75.4 302.9 66.3 307.4 85.3 C311.9 104.3 308.4 95.4 312.0 114.4 C315.6 133.4 311.9 125.8 318.2 142.3 C324.4 158.9 326.9 147.4 330.8 164.1 C334.7 180.9 326.4 174.1 329.9 192.6 C333.5 211.0 333.5 201.8 341.5 219.5 C349.5 237.3 349.0 227.5 354.0 245.9 C359.0 264.2 358.1 255.9 356.4 274.6 C354.7 293.3 350.4 283.3 348.9 301.9 C347.4 320.5 350.6 312.1 352.0 330.4 C353.3 348.8 353.0 346.3 352.9 357.1 C352.8 367.9 352.1 360.9 351.7 362.8" stroke="#795742" stroke-width="1.8" opacity="0.32"/>
<path d="M248.4 -2.0 C255.3 1.7 257.1 -2.3 269.0 9.1 C280.9 20.5 274.7 15.8 284.1 32.2 C293.6 48.6 290.0 40.2 297.4 58.2 C304.8 76.1 301.7 67.0 306.3 86.0 C310.9 104.9 307.5 96.0 311.1 115.0 C314.7 134.0 311.3 126.3 317.1 143.0 C322.9 159.6 325.2 148.2 328.6 164.9 C332.0 181.7 323.7 174.9 327.4 193.3 C331.0 211.7 331.1 202.5 339.5 220.2 C347.8 237.9 347.4 228.1 352.4 246.4 C357.4 264.7 356.2 256.4 354.4 275.1 C352.6 293.8 348.0 283.8 346.9 302.4 C345.9 321.0 349.0 312.6 351.1 330.9 C353.2 349.2 352.9 346.7 353.3 357.3 C353.7 368.0 352.7 361.1 352.3 362.9" stroke="#8e6a54" stroke-width="1.1" opacity="0.47"/>
<path d="M248.3 -2.0 C255.0 1.9 256.8 -2.0 268.3 9.6 C279.9 21.3 273.7 16.6 283.0 32.9 C292.3 49.3 288.8 41.0 296.3 58.8 C303.7 76.7 300.7 67.7 305.4 86.6 C310.0 105.5 306.6 96.5 310.2 115.5 C313.8 134.5 310.6 126.8 316.3 143.5 C322.0 160.2 324.4 148.8 327.3 165.7 C330.2 182.5 322.1 175.6 325.0 194.0 C327.8 212.3 327.6 203.2 335.9 220.8 C344.2 238.5 343.6 228.7 349.9 246.9 C356.2 265.2 355.3 256.9 354.8 275.6 C354.4 294.2 350.4 284.3 348.6 302.9 C346.7 321.5 349.4 313.1 349.4 331.3 C349.4 349.6 349.1 347.0 348.6 357.6 C348.0 368.2 348.1 361.2 347.8 363.0" stroke="#2a1912" stroke-width="0.9" opacity="0.62"/>
<path d="M248.3 -2.0 C254.8 2.0 256.5 -1.8 267.8 10.1 C279.0 21.9 272.9 17.1 282.1 33.5 C291.3 50.0 287.9 41.5 295.4 59.4 C302.9 77.2 299.9 68.2 304.6 87.0 C309.2 105.9 305.9 97.0 309.4 116.0 C312.9 134.9 309.6 127.2 315.0 144.0 C320.4 160.7 322.7 149.4 325.6 166.2 C328.6 183.1 320.6 176.1 323.8 194.5 C327.0 212.8 327.0 203.7 335.3 221.3 C343.6 238.9 343.0 229.1 348.7 247.3 C354.4 265.5 353.4 257.3 352.5 275.9 C351.6 294.5 347.5 284.7 346.1 303.2 C344.7 321.8 347.0 313.5 348.3 331.7 C349.5 349.9 349.3 347.4 349.8 357.8 C350.2 368.3 349.7 361.3 349.6 363.0" stroke="#3b261d" stroke-width="1.7" opacity="0.54"/>
<path d="M248.3 -2.0 C254.7 2.1 256.4 -1.7 267.6 10.2 C278.8 22.1 272.7 17.3 281.9 33.7 C291.0 50.1 287.7 41.7 295.2 59.5 C302.7 77.3 299.7 68.3 304.4 87.2 C309.0 106.0 305.5 97.1 309.1 116.1 C312.7 135.1 309.4 127.3 315.0 144.1 C320.7 160.9 323.1 149.5 325.9 166.4 C328.8 183.2 320.9 176.3 323.5 194.6 C326.2 213.0 326.0 203.8 333.8 221.5 C341.7 239.1 340.9 229.3 347.0 247.5 C353.2 265.6 352.2 257.4 352.3 276.0 C352.5 294.6 348.5 284.8 347.5 303.3 C346.5 321.9 348.9 313.6 349.3 331.8 C349.7 349.9 349.2 347.4 348.8 357.9 C348.3 368.3 348.3 361.3 348.0 363.1" stroke="#2a1912" stroke-width="1.7" opacity="0.44"/>
<path d="M248.2 -2.0 C254.4 2.3 256.1 -1.3 266.9 10.8 C277.7 23.0 271.6 18.0 280.7 34.5 C289.7 51.0 286.5 42.5 294.0 60.2 C301.6 78.0 298.7 69.0 303.4 87.8 C308.1 106.6 304.8 97.7 308.1 116.7 C311.5 135.6 308.3 127.9 313.4 144.7 C318.4 161.5 320.6 150.3 323.3 167.2 C326.0 184.0 318.3 177.0 321.6 195.3 C324.9 213.7 324.9 204.6 333.2 222.1 C341.4 239.7 340.8 229.9 346.3 248.0 C351.9 266.1 350.7 257.9 349.9 276.5 C349.1 295.1 344.9 285.3 343.9 303.8 C342.9 322.4 344.9 314.1 346.8 332.2 C348.8 350.3 348.6 347.8 349.7 358.1 C350.8 368.5 350.0 361.5 350.1 363.1" stroke="#20120d" stroke-width="2.4" opacity="0.44"/>
<path d="M306.2 107.3 C307.4 117.0 304.9 119.0 309.8 136.3 C314.6 153.5 316.8 142.5 320.8 159.1 C324.8 175.7 319.4 167.9 321.7 186.1 C324.0 204.4 321.1 196.1 327.7 213.9 C334.2 231.6 334.6 221.6 341.3 239.3 C348.0 257.1 346.6 248.5 347.8 267.2 C349.0 285.9 346.1 277.0 345.0 295.6 C343.9 314.1 342.9 304.7 344.4 323.0 C346.0 341.3 347.3 337.1 349.7 350.5 C352.0 363.9 350.9 358.9 351.5 363.2" stroke="#20120d" stroke-width="0.9" opacity="0.47"/>
<path d="M248.2 -2.0 C254.0 2.6 255.5 -0.8 265.7 11.8 C275.9 24.3 270.0 19.2 278.8 35.7 C287.7 52.2 284.6 43.6 292.3 61.3 C300.0 79.0 297.0 70.0 301.8 88.7 C306.6 107.5 303.3 98.6 306.7 117.5 C310.0 136.5 307.1 128.7 311.8 145.6 C316.6 162.5 318.7 151.4 320.9 168.3 C323.1 185.3 315.7 178.1 318.5 196.4 C321.3 214.7 321.3 205.6 329.2 223.1 C337.1 240.6 336.3 230.8 342.2 248.8 C348.0 266.9 346.5 258.6 346.8 277.2 C347.0 295.8 342.9 286.0 342.9 304.6 C343.0 323.2 344.7 314.9 346.9 332.9 C349.2 350.9 348.7 348.5 349.7 358.6 C350.8 368.7 349.9 361.7 350.0 363.2" stroke="#9a745b" stroke-width="0.9" opacity="0.42"/>
<path d="M248.1 -2.0 C253.8 2.7 255.2 -0.6 265.2 12.2 C275.1 25.0 269.2 19.7 278.0 36.3 C286.7 52.8 283.8 44.2 291.5 61.8 C299.2 79.5 296.3 70.5 301.1 89.2 C305.9 107.9 302.6 99.0 305.9 118.0 C309.2 136.9 306.5 129.0 311.0 146.0 C315.6 163.0 317.7 151.9 319.6 168.9 C321.5 185.8 314.1 178.7 316.6 196.9 C319.1 215.2 319.0 206.2 327.2 223.6 C335.4 241.0 334.6 231.2 341.2 249.2 C347.7 267.2 346.4 259.0 346.8 277.6 C347.2 296.1 343.1 286.4 342.3 304.9 C341.5 323.5 342.7 315.3 344.5 333.2 C346.2 351.2 346.1 348.7 347.6 358.8 C349.1 368.8 348.4 361.8 348.8 363.3" stroke="#20120d" stroke-width="2.3" opacity="0.46"/>
<path d="M248.1 -2.0 C253.6 2.9 255.0 -0.3 264.6 12.7 C274.3 25.6 268.4 20.3 277.1 36.9 C285.7 53.4 282.9 44.8 290.6 62.4 C298.4 79.9 295.4 71.0 300.3 89.7 C305.2 108.3 302.0 99.5 305.2 118.4 C308.4 137.3 305.7 129.4 310.0 146.5 C314.3 163.5 316.3 152.5 318.1 169.5 C319.9 186.5 312.7 179.2 315.3 197.5 C318.0 215.7 318.1 206.7 326.0 224.1 C334.0 241.5 333.0 231.7 339.1 249.6 C345.2 267.6 343.6 259.4 344.4 277.9 C345.1 296.5 341.1 286.8 341.4 305.3 C341.8 323.9 343.1 315.7 345.4 333.6 C347.7 351.4 347.1 349.0 348.3 359.0 C349.4 368.9 348.7 361.9 348.9 363.4" stroke="#20120d" stroke-width="2.0" opacity="0.61"/>
<path d="M248.0 -2.0 C253.3 3.1 254.6 0.1 263.8 13.3 C273.1 26.5 267.3 21.1 275.8 37.7 C284.4 54.3 281.6 45.6 289.4 63.1 C297.2 80.6 294.3 71.7 299.3 90.3 C304.2 108.9 301.1 100.1 304.2 119.0 C307.4 137.9 304.8 130.0 308.6 147.1 C312.4 164.2 314.2 153.2 315.6 170.2 C317.1 187.3 310.0 180.0 312.9 198.2 C315.9 216.4 316.0 207.4 324.5 224.8 C332.9 242.1 332.1 232.3 338.2 250.2 C344.3 268.1 342.7 259.9 342.9 278.4 C343.1 296.9 339.0 287.3 338.9 305.8 C338.8 324.4 339.8 316.2 342.6 334.0 C345.5 351.8 345.3 349.5 347.5 359.3 C349.7 369.1 348.6 362.0 349.2 363.4" stroke="#8e6a54" stroke-width="1.5" opacity="0.38"/>
<path d="M248.0 -2.0 C253.1 3.2 254.3 0.3 263.3 13.7 C272.3 27.2 266.5 21.7 275.0 38.3 C283.4 54.9 280.7 46.1 288.6 63.6 C296.5 81.1 293.6 72.2 298.5 90.8 C303.5 109.4 300.4 100.5 303.5 119.4 C306.6 138.3 304.1 130.4 307.8 147.5 C311.5 164.6 313.4 153.7 314.7 170.8 C316.0 187.9 309.1 180.5 311.8 198.7 C314.5 216.8 314.7 208.0 322.7 225.3 C330.6 242.6 329.6 232.8 335.7 250.6 C341.7 268.4 339.8 260.2 340.8 278.7 C341.7 297.3 337.6 287.7 338.6 306.2 C339.5 324.7 342.0 325.0 343.7 334.3" stroke="#2a1912" stroke-width="1.2" opacity="0.40"/>
<path d="M248.0 -2.0 C252.9 3.4 254.0 0.6 262.7 14.2 C271.4 27.8 265.7 22.2 274.1 38.9 C282.4 55.5 279.9 46.7 287.8 64.1 C295.6 81.6 292.7 72.7 297.8 91.2 C302.8 109.8 299.7 100.9 302.9 119.8 C306.0 138.7 303.8 130.8 307.2 147.9 C310.6 165.1 312.4 154.3 313.2 171.4 C314.0 188.5 307.2 181.1 309.6 199.2 C312.0 217.3 312.2 208.5 320.4 225.7 C328.7 243.0 327.7 233.2 334.3 251.0 C340.9 268.8 339.0 260.6 340.3 279.1 C341.7 297.6 337.5 288.0 338.3 306.6 C339.1 325.1 339.8 317.0 342.7 334.7 C345.7 352.4 345.2 350.0 347.2 359.7 C349.2 369.3 348.2 362.2 348.8 363.5" stroke="#2a1912" stroke-width="1.7" opacity="0.37"/>
<path d="M248.0 -2.0 C252.8 3.5 253.9 0.7 262.5 14.4 C271.0 28.1 265.3 22.5 273.6 39.2 C281.9 55.8 279.4 47.0 287.3 64.4 C295.2 81.8 292.4 72.9 297.4 91.5 C302.4 110.0 299.3 101.2 302.4 120.1 C305.4 139.0 303.1 131.0 306.6 148.2 C310.0 165.4 311.8 154.6 312.7 171.7 C313.5 188.8 306.7 181.4 309.0 199.5 C311.3 217.6 311.3 208.8 319.5 226.0 C327.7 243.2 326.6 233.5 333.6 251.2 C340.5 269.0 338.8 260.8 340.3 279.3 C341.8 297.8 337.9 288.2 338.1 306.7 C338.2 325.3 338.4 317.2 340.8 334.9 C343.1 352.5 343.0 350.2 345.2 359.8 C347.5 369.3 346.7 362.3 347.5 363.6" stroke="#9a745b" stroke-width="1.2" opacity="0.31"/>
<path d="M247.9 -2.0 C252.6 3.6 253.6 1.0 261.9 14.9 C270.1 28.8 264.5 23.1 272.7 39.8 C280.9 56.5 278.4 47.6 286.4 65.0 C294.4 82.3 291.5 73.4 296.6 92.0 C301.7 110.5 298.7 101.6 301.7 120.5 C304.6 139.4 302.4 131.4 305.5 148.6 C308.6 165.9 310.2 155.1 310.9 172.3 C311.5 189.4 305.0 182.0 307.5 200.0 C310.0 218.1 310.2 209.3 318.4 226.5 C326.6 243.7 325.5 233.9 332.2 251.6 C338.8 269.4 336.9 261.2 338.4 279.7 C339.8 298.2 335.9 288.6 336.6 307.1 C337.2 325.6 337.3 317.6 340.3 335.2 C343.4 352.8 343.0 350.5 345.6 360.0 C348.1 369.5 347.2 362.4 348.0 363.6" stroke="#1a0e09" stroke-width="1.4" opacity="0.40"/>
<path d="M247.9 -2.0 C252.2 3.9 253.2 1.4 261.0 15.6 C268.8 29.9 263.2 24.0 271.2 40.7 C279.3 57.5 277.0 48.5 285.0 65.8 C293.1 83.1 290.2 74.2 295.4 92.7 C300.5 111.2 297.7 102.3 300.6 121.2 C303.4 140.1 301.3 132.0 303.8 149.4 C306.3 166.7 307.6 156.0 308.0 173.2 C308.4 190.4 302.0 182.9 305.0 200.9 C308.1 218.9 308.6 210.2 317.0 227.3 C325.4 244.4 324.4 234.7 330.3 252.3 C336.2 269.9 333.7 261.8 334.7 280.2 C335.7 298.7 331.5 289.2 333.3 307.7 C335.2 326.2 335.3 318.2 340.2 335.7 C345.0 353.3 344.4 351.0 347.8 360.3 C351.1 369.6 349.4 362.6 350.2 363.7" stroke="#33201a" stroke-width="2.3" opacity="0.40"/>
<path d="M247.8 -2.0 C252.1 4.0 253.0 1.5 260.7 15.9 C268.3 30.2 262.8 24.3 270.8 41.0 C278.7 57.8 276.5 48.8 284.6 66.1 C292.7 83.4 289.8 74.5 295.0 92.9 C300.2 111.4 297.2 102.6 300.2 121.4 C303.1 140.3 301.3 132.2 303.8 149.6 C306.3 166.9 307.8 156.3 307.7 173.5 C307.6 190.7 301.1 183.1 303.5 201.2 C305.9 219.2 306.2 210.5 314.9 227.6 C323.6 244.7 322.6 234.9 329.6 252.5 C336.7 270.1 334.6 261.9 336.0 280.4 C337.5 298.9 333.4 289.4 334.0 307.9 C334.6 326.4 334.3 318.4 337.9 335.9 C341.6 353.4 341.5 351.2 344.9 360.4 C348.3 369.7 347.1 362.6 348.1 363.7" stroke="#795742" stroke-width="0.9" opacity="0.34"/>
<path d="M290.9 84.5 C293.2 93.9 294.4 93.6 297.7 112.6 C301.0 131.5 298.1 123.5 300.8 141.3 C303.6 159.1 305.6 148.8 305.9 165.9 C306.2 182.9 301.1 174.5 301.7 192.5 C302.3 210.5 300.8 202.5 307.7 219.9 C314.7 237.2 314.4 227.3 322.6 244.5 C330.7 261.7 328.5 253.2 332.2 271.6 C335.9 290.0 332.5 281.2 333.7 299.7 C334.8 318.2 332.8 309.2 335.7 327.2 C338.5 345.1 338.0 341.4 342.1 353.6 C346.2 365.9 346.0 360.4 347.9 363.8" stroke="#8e6a54" stroke-width="1.2" opacity="0.32"/>
<path d="M247.8 -2.0 C251.7 4.3 252.5 2.0 259.6 16.8 C266.7 31.5 261.3 25.4 269.0 42.2 C276.8 59.0 274.8 49.9 282.9 67.1 C291.1 84.3 288.2 75.5 293.5 93.9 C298.8 112.2 296.1 103.4 298.9 122.3 C301.7 141.1 300.1 133.0 301.9 150.4 C303.7 167.9 304.9 157.4 304.3 174.6 C303.6 191.9 297.3 184.2 299.9 202.2 C302.6 220.2 303.0 211.5 312.3 228.5 C321.6 245.6 320.6 235.8 327.9 253.3 C335.2 270.8 332.9 262.7 334.1 281.1 C335.3 299.5 331.2 290.1 331.5 308.6 C331.7 327.1 331.0 319.2 334.9 336.6 C338.8 354.0 339.1 351.7 343.3 360.8 C347.5 369.9 346.1 362.8 347.4 363.8" stroke="#9a745b" stroke-width="1.8" opacity="0.47"/>
<path d="M247.7 -2.0 C251.5 4.4 252.2 2.3 259.0 17.3 C265.7 32.2 260.4 26.1 268.0 42.9 C275.7 59.7 273.7 50.6 281.9 67.7 C290.2 84.9 287.3 76.0 292.6 94.4 C298.0 112.7 295.2 103.9 298.0 122.8 C300.8 141.6 299.4 133.5 301.1 150.9 C302.8 168.4 304.1 158.0 303.2 175.3 C302.3 192.5 296.2 184.9 298.4 202.8 C300.7 220.7 301.0 212.1 309.9 229.1 C318.7 246.1 317.6 236.3 325.0 253.8 C332.5 271.2 330.0 263.1 332.2 281.5 C334.3 299.9 330.3 290.6 331.5 309.1 C332.6 327.5 331.7 319.6 335.7 337.0 C339.6 354.3 339.4 352.1 343.2 361.1 C347.0 370.0 345.7 363.0 346.9 363.9" stroke="#1a0e09" stroke-width="2.0" opacity="0.68"/>
<path d="M264.4 34.5 C268.2 43.2 267.5 43.4 275.7 60.5 C283.9 77.6 282.2 68.0 289.0 85.7 C295.7 103.4 292.6 94.8 296.0 113.6 C299.4 132.5 296.8 124.5 299.1 142.3 C301.4 160.2 303.5 150.1 302.9 167.3 C302.3 184.4 297.3 175.9 297.3 193.8 C297.4 211.8 296.0 203.9 303.1 221.1 C310.3 238.4 309.8 228.5 318.7 245.6 C327.5 262.7 325.2 254.2 329.7 272.5 C334.1 290.8 330.8 282.1 332.1 300.6 C333.5 319.1 331.3 310.1 333.7 328.0 C336.1 345.9 335.2 342.3 339.2 354.3 C343.3 366.3 343.6 360.7 345.7 364.0" stroke="#86624c" stroke-width="1.7" opacity="0.21"/>
<path d="M247.6 -2.0 C251.0 4.8 251.6 2.9 257.7 18.3 C263.8 33.7 258.6 27.3 266.0 44.2 C273.5 61.1 271.7 51.8 280.0 68.9 C288.3 86.0 285.5 77.2 290.9 95.4 C296.4 113.7 293.8 104.9 296.5 123.7 C299.1 142.6 298.0 134.3 298.9 151.9 C299.9 169.5 300.8 159.2 299.4 176.5 C298.0 193.9 292.1 186.1 294.8 204.0 C297.5 221.9 298.2 213.3 307.5 230.2 C316.9 247.1 315.9 237.3 322.9 254.7 C329.8 272.0 327.0 263.9 328.3 282.3 C329.6 300.7 325.2 291.4 326.9 309.9 C328.5 328.3 327.2 320.5 333.3 337.7 C339.5 354.9 339.7 352.8 345.3 361.5 C350.9 370.3 348.5 363.2 350.1 364.0" stroke="#795742" stroke-width="2.3" opacity="0.25"/>
<path d="M247.6 -2.0 C250.7 5.0 251.2 3.2 257.0 18.9 C262.7 34.6 257.5 28.1 264.8 45.0 C272.2 61.9 270.6 52.6 278.9 69.6 C287.3 86.6 284.4 77.8 289.9 96.0 C295.4 114.3 292.8 105.5 295.5 124.3 C298.1 143.1 297.1 134.9 297.9 152.5 C298.8 170.2 299.8 159.9 298.0 177.3 C296.2 194.7 290.5 186.8 292.6 204.7 C294.7 222.5 295.1 214.0 304.3 230.8 C313.5 247.7 312.3 237.9 320.2 255.2 C328.0 272.5 325.3 264.4 327.8 282.8 C330.3 301.2 326.3 291.9 327.7 310.4 C329.0 328.8 327.3 321.0 331.9 338.2 C336.6 355.3 336.7 353.1 341.6 361.8 C346.5 370.4 345.0 363.3 346.7 364.1" stroke="#9a745b" stroke-width="2.3" opacity="0.37"/>
<path d="M247.6 -2.0 C250.6 5.0 251.1 3.4 256.7 19.1 C262.3 34.9 257.2 28.3 264.4 45.2 C271.7 62.2 270.1 52.9 278.5 69.9 C286.9 86.9 284.0 78.0 289.6 96.3 C295.1 114.5 292.5 105.7 295.1 124.5 C297.8 143.3 296.9 135.0 297.5 152.7 C298.2 170.4 299.1 160.2 297.1 177.6 C295.2 194.9 289.4 187.1 291.8 204.9 C294.2 222.7 294.9 214.2 304.4 231.1 C313.8 247.9 312.9 238.1 320.1 255.4 C327.3 272.7 324.3 264.6 326.0 282.9 C327.8 301.3 325.6 301.3 325.4 310.5" stroke="#795742" stroke-width="1.8" opacity="0.36"/>
<path d="M247.5 -2.0 C250.4 5.2 250.8 3.6 256.1 19.6 C261.4 35.6 256.3 28.9 263.5 45.9 C270.6 62.8 269.2 53.5 277.6 70.4 C286.0 87.4 283.2 78.6 288.8 96.8 C294.3 114.9 291.8 106.2 294.2 125.0 C296.5 143.8 295.5 135.5 295.9 153.2 C296.4 170.9 297.1 160.7 295.5 178.2 C293.9 195.6 288.4 187.7 291.1 205.5 C293.8 223.3 294.5 214.8 303.6 231.6 C312.6 248.4 311.5 238.6 318.3 255.8 C325.2 273.1 322.3 264.9 324.1 283.3 C326.0 301.7 321.8 292.5 323.8 310.9 C325.9 329.4 323.8 321.6 330.3 338.7 C336.7 355.7 336.9 353.6 343.2 362.1 C349.5 370.6 347.2 363.5 349.1 364.2" stroke="#3b261d" stroke-width="1.1" opacity="0.63"/>
<path d="M247.5 -2.0 C250.2 5.4 250.5 3.9 255.5 20.1 C260.5 36.3 255.4 29.6 262.5 46.5 C269.5 63.5 268.2 54.1 276.7 71.0 C285.1 87.9 282.3 79.1 287.9 97.3 C293.5 115.4 290.9 106.7 293.5 125.5 C296.0 144.3 295.2 135.9 295.5 153.7 C295.9 171.5 296.7 161.3 294.5 178.8 C292.3 196.3 286.9 188.3 288.8 206.1 C290.7 223.8 291.2 215.4 300.1 232.1 C309.0 248.9 307.6 239.1 315.4 256.3 C323.3 273.5 320.2 265.4 323.6 283.7 C327.0 302.1 323.0 292.9 325.5 311.3 C328.1 329.8 326.0 322.0 331.3 339.0 C336.6 356.0 336.3 353.9 341.5 362.3 C346.6 370.7 344.9 363.6 346.6 364.2" stroke="#8e6a54" stroke-width="2.4" opacity="0.39"/>
<path d="M257.3 29.1 C259.8 38.1 257.1 39.2 264.8 56.1 C272.4 73.1 272.0 63.0 280.3 79.9 C288.6 96.9 285.1 88.5 289.6 107.0 C294.1 125.5 291.8 117.0 293.7 135.5 C295.6 154.0 296.4 144.9 295.3 162.5 C294.2 180.1 292.4 170.5 290.4 188.3 C288.4 206.0 284.9 198.3 289.3 215.7 C293.7 233.1 294.2 223.9 303.7 240.5 C313.2 257.1 311.1 248.0 317.9 265.6 C324.7 283.3 321.4 275.0 324.1 293.4 C326.9 311.9 323.2 302.7 326.1 320.9 C329.0 339.2 326.2 333.7 332.8 348.1 C339.3 362.6 341.4 358.9 345.8 364.3" stroke="#3b261d" stroke-width="0.8" opacity="0.60"/>
<path d="M247.4 -2.0 C249.8 5.6 250.0 4.4 254.5 20.9 C259.0 37.5 254.0 30.6 260.9 47.6 C267.8 64.6 266.6 55.1 275.1 72.0 C283.7 88.8 280.9 80.0 286.6 98.1 C292.3 116.2 289.7 107.4 292.2 126.2 C294.7 145.0 294.2 136.6 294.0 154.5 C293.8 172.3 294.5 162.3 291.7 179.8 C288.9 197.3 283.6 189.3 285.5 207.0 C287.4 224.7 288.0 216.3 297.4 233.0 C306.8 249.7 305.5 239.9 313.7 257.0 C321.9 274.1 318.9 266.0 321.9 284.3 C325.0 302.7 320.9 293.6 322.9 312.0 C324.9 330.4 322.1 322.7 328.0 339.6 C333.8 356.5 334.1 354.5 340.5 362.7 C346.8 370.9 344.8 363.8 346.9 364.3" stroke="#3b261d" stroke-width="1.8" opacity="0.38"/>
<path d="M247.4 -2.0 C249.5 5.9 249.6 4.8 253.7 21.6 C257.7 38.5 252.8 31.5 259.5 48.5 C266.2 65.6 265.2 56.0 273.8 72.8 C282.4 89.6 279.6 80.8 285.4 98.8 C291.2 116.9 288.8 108.1 291.1 126.9 C293.5 145.7 293.0 137.2 292.4 155.2 C291.7 173.1 292.2 163.2 289.2 180.7 C286.1 198.3 281.1 190.1 283.2 207.8 C285.3 225.5 286.0 217.2 295.5 233.8 C305.0 250.4 303.7 240.6 311.7 257.7 C319.7 274.7 316.5 266.6 319.6 284.9 C322.6 303.2 318.6 294.1 321.0 312.6 C323.4 331.0 320.4 323.3 326.8 340.2 C333.2 357.0 333.4 354.9 340.2 363.0 C346.9 371.1 344.7 364.0 347.0 364.4" stroke="#86624c" stroke-width="1.8" opacity="0.28"/>
<path d="M261.9 58.0 C267.2 65.8 269.3 64.7 277.8 81.5 C286.3 98.3 283.0 90.0 287.4 108.4 C291.8 126.8 289.5 118.2 291.0 136.8 C292.5 155.3 293.3 146.4 291.8 164.1 C290.3 181.8 288.5 172.3 286.5 190.0 C284.5 207.7 281.7 200.0 285.9 217.3 C290.1 234.6 290.4 225.4 299.1 241.9 C307.7 258.4 305.3 249.3 311.8 266.8 C318.3 284.3 314.6 276.1 318.5 294.5 C322.5 312.9 318.9 303.9 323.6 322.1 C328.3 340.3 324.9 334.9 332.7 349.1 C340.5 363.2 342.3 359.3 347.1 364.5" stroke="#8e6a54" stroke-width="1.2" opacity="0.41"/>
<path d="M255.7 40.6 C259.1 49.3 257.6 49.9 265.9 66.7 C274.1 83.4 273.0 73.7 280.5 90.9 C287.9 108.2 284.9 99.7 288.2 118.4 C291.6 137.1 290.3 128.6 290.5 146.9 C290.6 165.2 292.4 155.8 288.8 173.4 C285.3 191.0 280.4 181.9 279.8 199.6 C279.1 217.3 279.1 209.7 286.8 226.6 C294.6 243.5 293.8 233.6 303.1 250.3 C312.4 266.9 309.4 258.4 314.6 276.4 C319.9 294.5 315.9 285.9 318.8 304.3 C321.7 322.8 318.4 314.2 323.3 331.8 C328.2 349.4 325.9 346.3 333.4 357.2 C340.9 368.1 341.7 362.1 345.8 364.5" stroke="#3b261d" stroke-width="2.3" opacity="0.59"/>
<path d="M289.5 137.8 C289.5 146.9 291.8 147.5 289.4 165.3 C287.0 183.2 284.9 173.6 282.3 191.3 C279.7 209.0 277.1 201.2 281.6 218.5 C286.0 235.7 286.4 226.6 295.7 243.0 C305.0 259.4 302.7 250.3 309.6 267.7 C316.4 285.1 312.6 276.9 316.3 295.3 C320.0 313.7 316.2 304.8 320.6 322.9 C325.0 341.1 323.1 336.2 329.5 349.8 C336.0 363.4 336.4 359.1 339.9 363.7" stroke="#20120d" stroke-width="2.3" opacity="0.57"/>
<path d="M247.2 -2.0 C248.6 6.5 248.5 5.8 251.4 23.4 C254.3 41.1 249.6 33.7 255.9 50.9 C262.2 68.0 261.6 58.3 270.4 74.9 C279.2 91.5 276.4 82.8 282.3 100.7 C288.3 118.6 286.0 109.9 288.3 128.6 C290.5 147.4 290.5 138.8 289.0 156.9 C287.4 175.1 287.7 165.3 283.6 183.0 C279.4 200.7 274.9 192.4 276.5 209.9 C278.2 227.5 278.9 219.3 288.5 235.8 C298.1 252.2 296.5 242.4 305.2 259.3 C314.0 276.1 310.4 268.1 314.8 286.3 C319.1 304.6 315.2 295.7 318.4 314.1 C321.6 332.4 317.9 324.9 324.3 341.5 C330.8 358.1 330.8 356.1 337.7 363.9 C344.6 371.6 342.6 364.4 345.0 364.6" stroke="#9a745b" stroke-width="1.2" opacity="0.20"/>
<path d="M247.2 -2.0 C248.4 6.7 248.2 6.1 250.7 24.0 C253.2 41.9 248.6 34.4 254.8 51.6 C261.0 68.8 260.4 59.0 269.3 75.6 C278.2 92.2 275.4 83.4 281.4 101.3 C287.4 119.2 285.2 110.5 287.3 129.2 C289.5 147.9 289.7 139.3 287.7 157.5 C285.8 175.7 285.8 166.0 281.5 183.7 C277.1 201.4 272.6 193.1 274.7 210.6 C276.7 228.1 277.7 220.0 287.6 236.4 C297.4 252.8 296.0 243.0 304.1 259.8 C312.2 276.6 308.2 268.5 311.8 286.8 C315.4 305.0 311.0 296.1 314.8 314.5 C318.7 332.9 314.8 325.4 323.3 341.9 C331.8 358.5 332.0 356.5 340.3 364.1 C348.6 371.7 345.6 364.5 348.2 364.7" stroke="#795742" stroke-width="2.0" opacity="0.48"/>
<path d="M283.4 110.9 C284.6 120.3 286.2 120.4 287.2 139.1 C288.2 157.8 289.4 148.9 286.3 166.9 C283.2 184.9 281.1 175.3 277.8 193.0 C274.5 210.7 272.4 202.9 276.4 220.1 C280.5 237.2 280.6 228.2 290.1 244.5 C299.5 260.8 297.0 251.6 304.7 268.9 C312.5 286.2 308.5 278.0 313.3 296.4 C318.1 314.8 314.5 305.9 319.2 324.1 C323.8 342.2 321.2 337.3 327.4 350.8 C333.5 364.2 334.2 359.8 337.5 364.3" stroke="#6b4c3a" stroke-width="1.2" opacity="0.30"/>
<path d="M256.0 61.7 C261.6 69.4 263.8 68.1 272.7 84.6 C281.6 101.1 278.1 93.0 282.8 111.2 C287.4 129.5 285.7 120.7 286.6 139.4 C287.4 158.2 288.7 149.3 285.2 167.4 C281.7 185.4 279.4 175.8 276.1 193.5 C272.7 211.2 270.5 203.4 275.0 220.5 C279.5 237.6 279.7 228.6 289.6 244.9 C299.5 261.1 297.2 252.0 304.7 269.2 C312.3 286.5 308.3 278.3 312.1 296.7 C316.0 315.1 312.0 306.2 316.3 324.4 C320.6 342.5 315.0 337.5 325.0 351.0 C334.9 364.5 339.1 360.2 346.1 364.8" stroke="#1a0e09" stroke-width="2.1" opacity="0.51"/>
<path d="M247.1 -2.0 C247.8 7.0 247.5 6.8 249.3 25.1 C251.2 43.5 246.6 35.8 252.6 53.1 C258.5 70.3 258.2 60.4 267.2 76.9 C276.2 93.4 273.4 84.7 279.5 102.4 C285.6 120.2 283.5 111.5 285.6 130.3 C287.6 149.0 288.1 140.3 285.6 158.6 C283.1 176.9 283.1 167.4 278.1 185.1 C273.1 202.9 268.9 194.4 270.6 211.9 C272.3 229.4 273.3 221.3 283.2 237.6 C293.1 253.9 291.7 244.1 300.4 260.8 C309.2 277.5 305.3 269.4 309.5 287.6 C313.7 305.8 309.6 297.1 313.1 315.4 C316.7 333.8 311.9 326.4 320.1 342.8 C328.3 359.2 328.7 357.3 337.6 364.6 C346.4 372.0 343.6 364.8 346.7 364.8" stroke="#2a1912" stroke-width="2.0" opacity="0.50"/>
<path d="M247.1 -2.0 C247.6 7.2 247.2 7.1 248.7 25.6 C250.3 44.2 245.8 36.4 251.6 53.7 C257.5 71.0 257.2 61.1 266.3 77.5 C275.3 93.9 272.6 85.2 278.7 102.9 C284.8 120.7 282.9 112.0 284.7 130.7 C286.5 149.4 286.9 140.7 284.1 159.1 C281.3 177.4 281.1 168.0 276.2 185.8 C271.3 203.6 267.3 195.0 269.3 212.5 C271.4 229.9 272.4 221.9 282.4 238.1 C292.4 254.4 290.9 244.6 299.4 261.2 C307.9 277.9 303.9 269.8 307.9 288.0 C312.0 306.2 308.0 297.5 311.5 315.8 C315.0 334.2 310.1 326.8 318.4 343.1 C326.7 359.5 327.2 357.6 336.3 364.8 C345.4 372.1 342.6 364.9 345.8 364.9" stroke="#20120d" stroke-width="1.4" opacity="0.63"/>
<path d="M283.4 121.3 C283.9 130.8 285.9 131.1 284.8 149.7 C283.7 168.3 285.1 159.4 280.1 177.2 C275.0 195.0 270.6 185.6 269.8 203.1 C268.9 220.7 270.0 213.3 277.5 229.9 C285.1 246.6 283.9 236.8 292.5 253.2 C301.1 269.5 297.4 261.1 303.4 278.9 C309.5 296.7 305.3 288.2 310.6 306.7 C315.9 325.1 315.4 322.0 319.3 334.1 C323.2 346.3 321.4 340.1 322.4 343.1" stroke="#1a0e09" stroke-width="1.0" opacity="0.67"/>
      </g>
    </g>
    <!-- face -->
    <path fill="url(#gface)" d="M240.0 55.5 C233.3 53.5 239.0 52.9 230.0 57.0 C221.0 61.1 223.7 58.5 213.0 67.7 C202.3 76.9 207.2 73.4 198.0 84.7 C188.8 96.0 192.2 91.1 185.5 101.7 C178.8 112.3 181.7 107.8 178.0 116.6 C174.3 125.4 175.9 120.2 174.5 128.0 C173.1 135.8 173.8 131.7 173.8 140.0 C173.8 148.3 173.8 144.5 174.5 153.0 C175.2 161.5 174.5 157.2 176.0 165.5 C177.5 173.8 176.5 169.5 179.0 178.0 C181.5 186.5 180.4 183.7 183.4 191.0 C186.4 198.3 184.5 194.3 188.0 200.0 C191.5 205.7 189.7 202.7 194.0 208.0 C198.3 213.3 196.0 211.1 201.0 216.0 C206.0 220.9 203.9 219.6 208.9 222.8 C213.9 226.0 211.1 224.3 216.0 225.5 C220.9 226.7 217.7 226.5 223.7 226.5 C229.7 226.5 226.9 226.7 234.0 225.5 C241.1 224.3 238.3 226.0 245.0 222.8 C251.7 219.6 248.3 220.9 254.0 216.0 C259.7 211.1 257.0 213.5 262.0 208.0 C267.0 202.5 264.8 205.2 269.0 199.5 C273.2 193.8 271.2 198.2 274.7 191.0 C278.2 183.8 276.7 186.5 279.5 178.0 C282.3 169.5 281.2 173.5 283.0 165.5 C284.8 157.5 284.2 161.2 285.0 154.0 C285.8 146.8 285.5 150.7 285.3 144.0 C285.1 137.3 285.6 140.3 284.5 134.0 C283.4 127.7 284.6 133.0 282.0 125.0 C279.4 117.0 280.1 118.7 276.8 110.0 C273.5 101.3 275.6 106.0 272.0 99.0 C268.4 92.0 269.7 95.3 266.0 89.0 C262.3 82.7 264.5 85.7 261.0 80.0 C257.5 74.3 259.3 77.7 255.6 72.0 C251.9 66.3 255.2 68.5 250.0 63.0 C244.8 57.5 246.7 57.5 240.0 55.5 Z"/>
    <g filter="url(#b3)">
      <ellipse cx="266" cy="172" rx="12" ry="34" fill="#c98f78" opacity=".5"/>
      <ellipse cx="183" cy="160" rx="7" ry="30" fill="#c98f78" opacity=".4"/>
      <ellipse cx="228" cy="86" rx="26" ry="14" fill="#fff3ee" opacity=".6"/>
      <ellipse cx="196" cy="160" rx="12" ry="9" fill="#efb1a4" opacity=".45"/>
      <ellipse cx="256" cy="160" rx="12" ry="9" fill="#efb1a4" opacity=".45"/>
      <path d="M232 120 C236 140 238 156 240 166 L230 170 C228 150 228 136 226 122 Z" fill="#d6a08a" opacity=".55"/>
      <ellipse cx="194" cy="125" rx="15" ry="8" fill="#d9a39a" opacity=".55"/>
      <ellipse cx="253" cy="125.5" rx="15" ry="8" fill="#d9a39a" opacity=".55"/>
    </g>
    <!-- brows -->
    <path d="M177.500 115 C188 109.500 202 110 212.500 115 L211.500 118.800 C202 114.800 189 114.800 178.500 119 Z" fill="#7a5a48" opacity=".85" filter="url(#b1)"/>
    <path d="M237 117.500 C250 110.500 264 108.500 277 110.500 L277.500 113.800 C265 112.800 251 114.500 238.500 121 Z" fill="#7a5a48" opacity=".85" filter="url(#b1)"/>
    <!-- eyes -->
    <g filter="url(#b05)">
    <path d="M181.500 127 C187 119.500 201.500 119 208.500 127.500 C202 132 188 132 181.500 127 Z" fill="#f1e1dc"/>
    <path d="M240 128.500 C246 120 260.500 120 267 127.500 C260 132.500 247 133 240 128.500 Z" fill="#f1e1dc"/>
    <circle cx="195.400" cy="125.800" r="5.300" fill="#5a3727"/><circle cx="195.400" cy="125.800" r="2.300" fill="#150b07"/>
    <circle cx="253.400" cy="126.600" r="5.300" fill="#5a3727"/><circle cx="253.400" cy="126.600" r="2.300" fill="#150b07"/>
    <path d="M179.500 128 C186 118 202.500 117.500 210.500 128.500 C202.500 121.800 188 122.200 179.500 128 Z" fill="#21120d"/>
    <path d="M238 129.500 C245.500 118.500 261.500 118.500 269 127.500 C261 122 247 122.800 238 129.500 Z" fill="#21120d"/>
    <path d="M183 129.500 C189 133.500 202 133.500 208 129.500" fill="none" stroke="#8c5a4c" stroke-width=".8" opacity=".7"/>
    <path d="M241.500 131 C248 134.800 260 134.500 266 130" fill="none" stroke="#8c5a4c" stroke-width=".8" opacity=".7"/>
    <circle cx="197" cy="124.400" r="1" fill="#fff"/><circle cx="255" cy="125.200" r="1" fill="#fff"/>
    </g>
    <!-- nose -->
    <g filter="url(#b1)" fill="none" stroke-linecap="round">
      <path d="M213 165 C216 170 221 171.5 225 170 C229 171.5 235 170 238 164.5" stroke="#bf846d" stroke-width="1.7"/>
      <path d="M219 169.5 c1.5 1 3 1 4 0 M228 169.5 c1.5 1 3 1 4 0" stroke="#9a5c48" stroke-width="1.3"/>
    </g>
    <!-- lips -->
    <path d="M203 187.5 C210 185 218 183 222.5 185 C227 183 237 184.5 248 187.5 C240 196.5 232 200.5 224.5 200.5 C216.5 200.5 208 195.5 203 187.5 Z" fill="#e07f6f" filter="url(#b05)"/>
    <path d="M203 187.5 C212 188.5 220 189.5 224.5 189.5 C230 189.5 240 188.5 248 187.5" fill="none" stroke="#a9493f" stroke-width="1.1" filter="url(#b05)"/>
    <path d="M212 206 C220 209 230 209 238 205" fill="none" stroke="#d9a58f" stroke-width="2" opacity=".7" filter="url(#b1)"/>
    <!-- camera -->
    <path d="M153 259 L228 258 L258 262 L272 270 L273 290 L262 300 L160 300 L152 290 Z" fill="#2b1a18"/>
    <path d="M156 251.5 C180 249.5 205 250.5 226 252.5 L227 262.5 L157 260.5 Z" fill="#c3c6c9"/>
    <path d="M156 251.5 C180 249.5 205 250.5 226 252.5 L226 255.5 L156.500 254.500 Z" fill="#f1f2f3"/>
    <circle cx="229" cy="292" r="31.5" fill="url(#glens)"/>
    <circle cx="227.6" cy="290.6" r="1.6" fill="#b8c8d6" opacity=".85"/>
    <path d="M203 276 A31 31 0 0 0 214 319" fill="none" stroke="#3f525e" stroke-width="2" opacity=".7" filter="url(#b05)"/>
    <!-- hands -->
    <path fill="url(#gskin)" d="M187.6 244.1 C184.1 241.0 183.4 241.3 173.8 238.8 C164.2 236.3 168.8 236.0 158.9 236.7 C149.0 237.4 151.4 235.6 144.0 240.9 C136.6 246.2 140.3 243.7 136.6 252.6 C132.9 261.5 135.3 256.9 133.0 267.5 C130.7 278.1 131.8 275.3 129.8 284.5 C127.8 293.7 127.6 288.1 127.0 295.2 C126.4 302.3 126.0 298.7 128.0 305.8 C130.0 312.9 129.9 307.9 133.0 316.4 C136.1 324.9 134.9 320.7 137.2 331.3 C139.5 341.9 139.1 338.4 139.8 348.3 C140.5 358.2 137.2 353.9 139.3 361.0 C141.4 368.1 138.9 366.0 146.1 369.6 C153.3 373.2 151.8 372.8 161.0 371.7 C170.2 370.6 167.4 372.8 173.8 366.4 C180.2 360.0 177.7 362.2 180.2 352.6 C182.7 343.0 178.6 345.2 181.4 337.7 C184.2 330.2 181.3 333.6 188.7 330.2 C196.1 326.8 199.6 334.2 203.5 327.5 C207.4 320.8 202.3 320.8 200.3 310.0 C198.3 299.2 199.0 305.0 197.6 295.2 C196.2 285.4 201.2 289.6 196.1 280.7 C191.0 271.8 190.8 274.4 182.3 268.6 C173.8 262.8 178.4 263.7 170.6 263.3 C162.8 262.9 164.6 265.0 158.9 267.5 C153.2 270.0 154.7 274.2 153.6 270.7 C152.5 267.2 153.9 263.3 155.7 256.9 C157.5 250.5 152.9 254.1 158.9 251.6 C164.9 249.1 165.3 250.6 173.8 249.4 C182.3 248.2 179.8 249.8 184.4 248.0 C189.0 246.2 191.1 247.2 187.6 244.1 Z"/>
    <path fill="url(#gskin)" d="M234.4 246.3 C234.4 243.1 234.7 247.0 241.8 245.2 C248.9 243.4 245.7 240.5 255.6 240.9 C265.5 241.3 261.3 239.6 271.6 246.3 C281.9 253.0 279.3 251.2 286.4 261.1 C293.5 271.0 289.8 266.8 292.8 276.0 C295.8 285.2 292.6 278.9 295.4 288.8 C298.2 298.7 297.2 295.2 301.3 305.8 C305.4 316.4 303.4 309.4 307.7 320.7 C312.0 332.0 309.8 327.8 314.1 339.8 C318.4 351.8 315.2 344.1 320.5 356.8 C325.8 369.5 332.1 367.4 330.0 378.0 C327.9 388.6 325.1 386.6 314.1 388.7 C303.1 390.8 306.3 390.1 297.1 384.4 C287.9 378.7 294.2 379.5 286.4 371.7 C278.6 363.9 282.9 368.8 273.7 361.0 C264.5 353.2 267.3 354.3 258.8 348.3 C250.3 342.3 254.4 345.5 248.2 343.0 C242.0 340.5 242.4 343.4 240.1 340.9 C237.8 338.4 242.2 338.7 241.4 335.5 C240.6 332.3 239.4 334.1 237.6 331.3 C235.8 328.5 233.1 330.5 235.9 327.0 C238.7 323.5 238.4 326.4 246.0 320.7 C253.6 315.0 253.1 317.1 258.8 310.0 C264.5 302.9 260.9 305.4 263.0 299.4 C265.1 293.4 266.6 298.4 265.2 292.0 C263.8 285.6 263.8 289.2 258.8 280.3 C253.8 271.4 256.0 273.9 250.3 265.4 C244.6 256.9 247.1 261.2 241.8 254.8 C236.5 248.4 234.4 249.5 234.4 246.3 Z"/>
    <g filter="url(#b1)" fill="none" stroke="#b77f69" stroke-width="1.5" stroke-linecap="round" opacity=".8">
      <path d="M155.7 286.6 C159.6 285.9 159.2 284.9 167.4 284.5 C175.5 284.2 170.6 281.7 180.2 285.6 C189.7 289.5 190.8 292.7 196.1 296.2"/>
      <path d="M152.5 303.7 C157.5 303.3 157.5 302.6 167.4 302.6 C177.3 302.6 171.6 300.5 182.3 303.7 C192.9 306.8 193.6 309.3 199.3 312.2"/>
      <path d="M153.6 272.2 C156.1 270.6 155.4 270.4 161.0 267.5 C166.7 264.7 163.5 263.3 170.6 263.7 C177.7 264.0 174.1 263.2 182.3 268.6 C190.4 274.0 190.8 276.1 195.0 279.8"/>
      <path d="M152.5 254.8 C155.4 253.7 153.9 253.3 161.0 251.6 C168.1 249.9 166.0 250.7 173.8 249.7 C181.6 248.6 180.9 248.8 184.4 248.4"/>
      <path d="M137.6 288.8 C139.1 287.4 138.3 287.2 141.9 284.5 C145.4 281.8 144.4 282.8 148.3 280.7 C152.2 278.6 151.8 279.0 153.6 278.1"/>
      <path d="M237.6 252.6 C241.1 257.6 239.7 256.2 248.2 267.5 C256.7 278.9 256.1 277.3 263.1 286.6 C270.0 296.0 267.0 292.6 269.0 295.6"/>
      <path d="M256.7 248.8 C261.6 254.3 263.4 254.8 271.6 265.4 C279.7 276.0 276.2 272.2 281.1 280.7 C286.1 289.2 284.7 287.5 286.4 290.9"/>
      <path d="M246.1 336.0 C251.7 333.1 251.7 332.1 263.1 327.5 C274.4 322.8 269.4 326.3 280.1 321.9 C290.7 317.5 290.0 316.8 294.9 314.3"/>
      <path d="M248.6 321.1 C253.4 319.7 254.7 320.5 263.1 316.8 C271.4 313.2 268.0 315.8 273.7 310.0 C279.4 304.2 277.9 302.9 280.1 299.4"/>
      <path d="M268.4 296.2 C272.3 294.6 272.6 293.7 280.1 291.3 C287.5 289.0 287.2 289.9 290.7 289.2"/>
      <path d="M301.3 310.0 C304.2 317.1 304.2 317.1 309.8 331.3 C315.5 345.5 313.4 339.1 318.3 352.6 C323.3 366.0 322.6 365.3 324.7 371.7"/>
    </g>
    <g fill="#f6e3de" opacity=".9" filter="url(#b05)">
      <ellipse cx="183.3" cy="244.1" rx="4.2" ry="2.6" transform="rotate(-5 183.3 244.1)"/>
      <ellipse cx="200.3" cy="324.5" rx="4.2" ry="2.6" transform="rotate(80 200.3 324.5)"/>
      <ellipse cx="235.9" cy="248.0" rx="4.2" ry="2.6" transform="rotate(40 235.9 248.0)"/>
      <ellipse cx="257.1" cy="242.4" rx="4.2" ry="2.6" transform="rotate(30 257.1 242.4)"/>
      <ellipse cx="237.1" cy="329.6" rx="4.2" ry="2.6" transform="rotate(-30 237.1 329.6)"/>
      <ellipse cx="242.2" cy="340.9" rx="4.2" ry="2.6" transform="rotate(-20 242.2 340.9)"/>
    </g>
    <g filter="url(#b3)" opacity=".5">
      <path d="M140 330 C150 340 168 344 180 340 L178 366 L142 362 Z" fill="#c98f78"/>
      <path d="M290 350 C300 362 310 372 326 372 L314 388 L294 382 Z" fill="#c98f78"/>
    </g>
    <!-- cuffs -->
    <path fill="#bf630d" d="M133 350 C146 362 164 368 181 362 L178 382 C160 388 140 382 124 368 Z"/>
    <path fill="url(#rib)" d="M133 350 C146 362 164 368 181 362 L178 382 C160 388 140 382 124 368 Z"/>
    <path fill="#bf630d" d="M284 376 C298 392 318 394 334 370 L346 386 C328 412 298 412 276 392 Z"/>
    <path fill="url(#rib)" d="M284 376 C298 392 318 394 334 370 L346 386 C328 412 298 412 276 392 Z"/>
  </symbol>
</defs>
</svg>
<svg style="left:959.5px;top:85px" width="500.7" height="501" viewBox="0 0 500 501" preserveAspectRatio="none"><use href="#photo"/></svg>
<!--PHOTO-END-->
<!-- handles -->
<div class="abs hd" style="left:952.5px;top:80px"></div>
<div class="abs hd" style="left:1203px;top:80px"></div>
<div class="abs hd" style="left:1453.5px;top:80px"></div>
<div class="abs hd" style="left:952.5px;top:330px"></div>
<div class="abs hd" style="left:1453.5px;top:330px"></div>
<div class="abs hd" style="left:952.5px;top:580.5px"></div>
<div class="abs hd" style="left:1203px;top:580.5px"></div>
<div class="abs hd" style="left:1453.5px;top:580.5px"></div>

<!-- preview pill -->
<div class="abs" id="pill" style="left:543px;top:95px;width:96px;height:33px;border-radius:17px;background:#3d55e9"></div>
<div class="abs" style="left:554px;top:111.2px;width:18px;height:1.6px;background:rgba(255,255,255,.8)"></div>
<div class="abs" style="left:560.2px;top:104.3px;width:5.4px;height:15.6px;background:#fff;border-radius:1px"></div>
<div class="t" id="t-prev" style="left:576.2px;top:102.5px;letter-spacing:-0.177px;font-size:15px">Preview</div>

<!-- thumbnail -->
<svg style="left:534px;top:608px" width="61" height="60" viewBox="0 0 61 60"><defs><clipPath id="cpt"><rect width="61" height="60" rx="9"/></clipPath></defs><g clip-path="url(#cpt)"><use href="#photo" width="61" height="60"/></g></svg>

<div class="t" id="t-orig" style="left:537.4px;top:677.3px;letter-spacing:-0.313px;font-size:16px">Original</div>

<!-- replace button -->
<div class="abs" id="repl" style="left:533.5px;top:729.5px;width:1352px;height:44.5px;border-radius:6px;background:linear-gradient(90deg,#6a11cb 0%,#2575fc 100%);box-shadow:0 4px 10px rgba(0,0,0,.35)"></div>
<svg style="left:1043px;top:743px" width="20" height="20" viewBox="0 0 20 20" fill="none" stroke="#fff" stroke-width="1.3" stroke-linejoin="round">
  <path d="M0.7 2 a1.3 1.3 0 0 1 1.3 -1.3 H15.8 L19.3 4.2 V18 a1.3 1.3 0 0 1 -1.3 1.3 H2 a1.3 1.3 0 0 1 -1.3 -1.3 Z"/>
  <path d="M4 0.8 V7 a1 1 0 0 0 1 1 H15.2 a1 1 0 0 0 1 -1 V0.8"/>
  <path d="M3 19.2 V12.6 a1.2 1.2 0 0 1 1.2 -1.2 H16 a1.2 1.2 0 0 1 1.2 1.2 V19.2"/>
  <rect x="11.4" y="2.8" width="2.2" height="3.1" fill="#fff" stroke="none"/>
</svg>
<div class="t" id="t-repl" style="left:1071.2px;top:744.2px;letter-spacing:-0.073px;font-size:16px">Replace original image using this AI images</div>


</div>
</body>
</html>
